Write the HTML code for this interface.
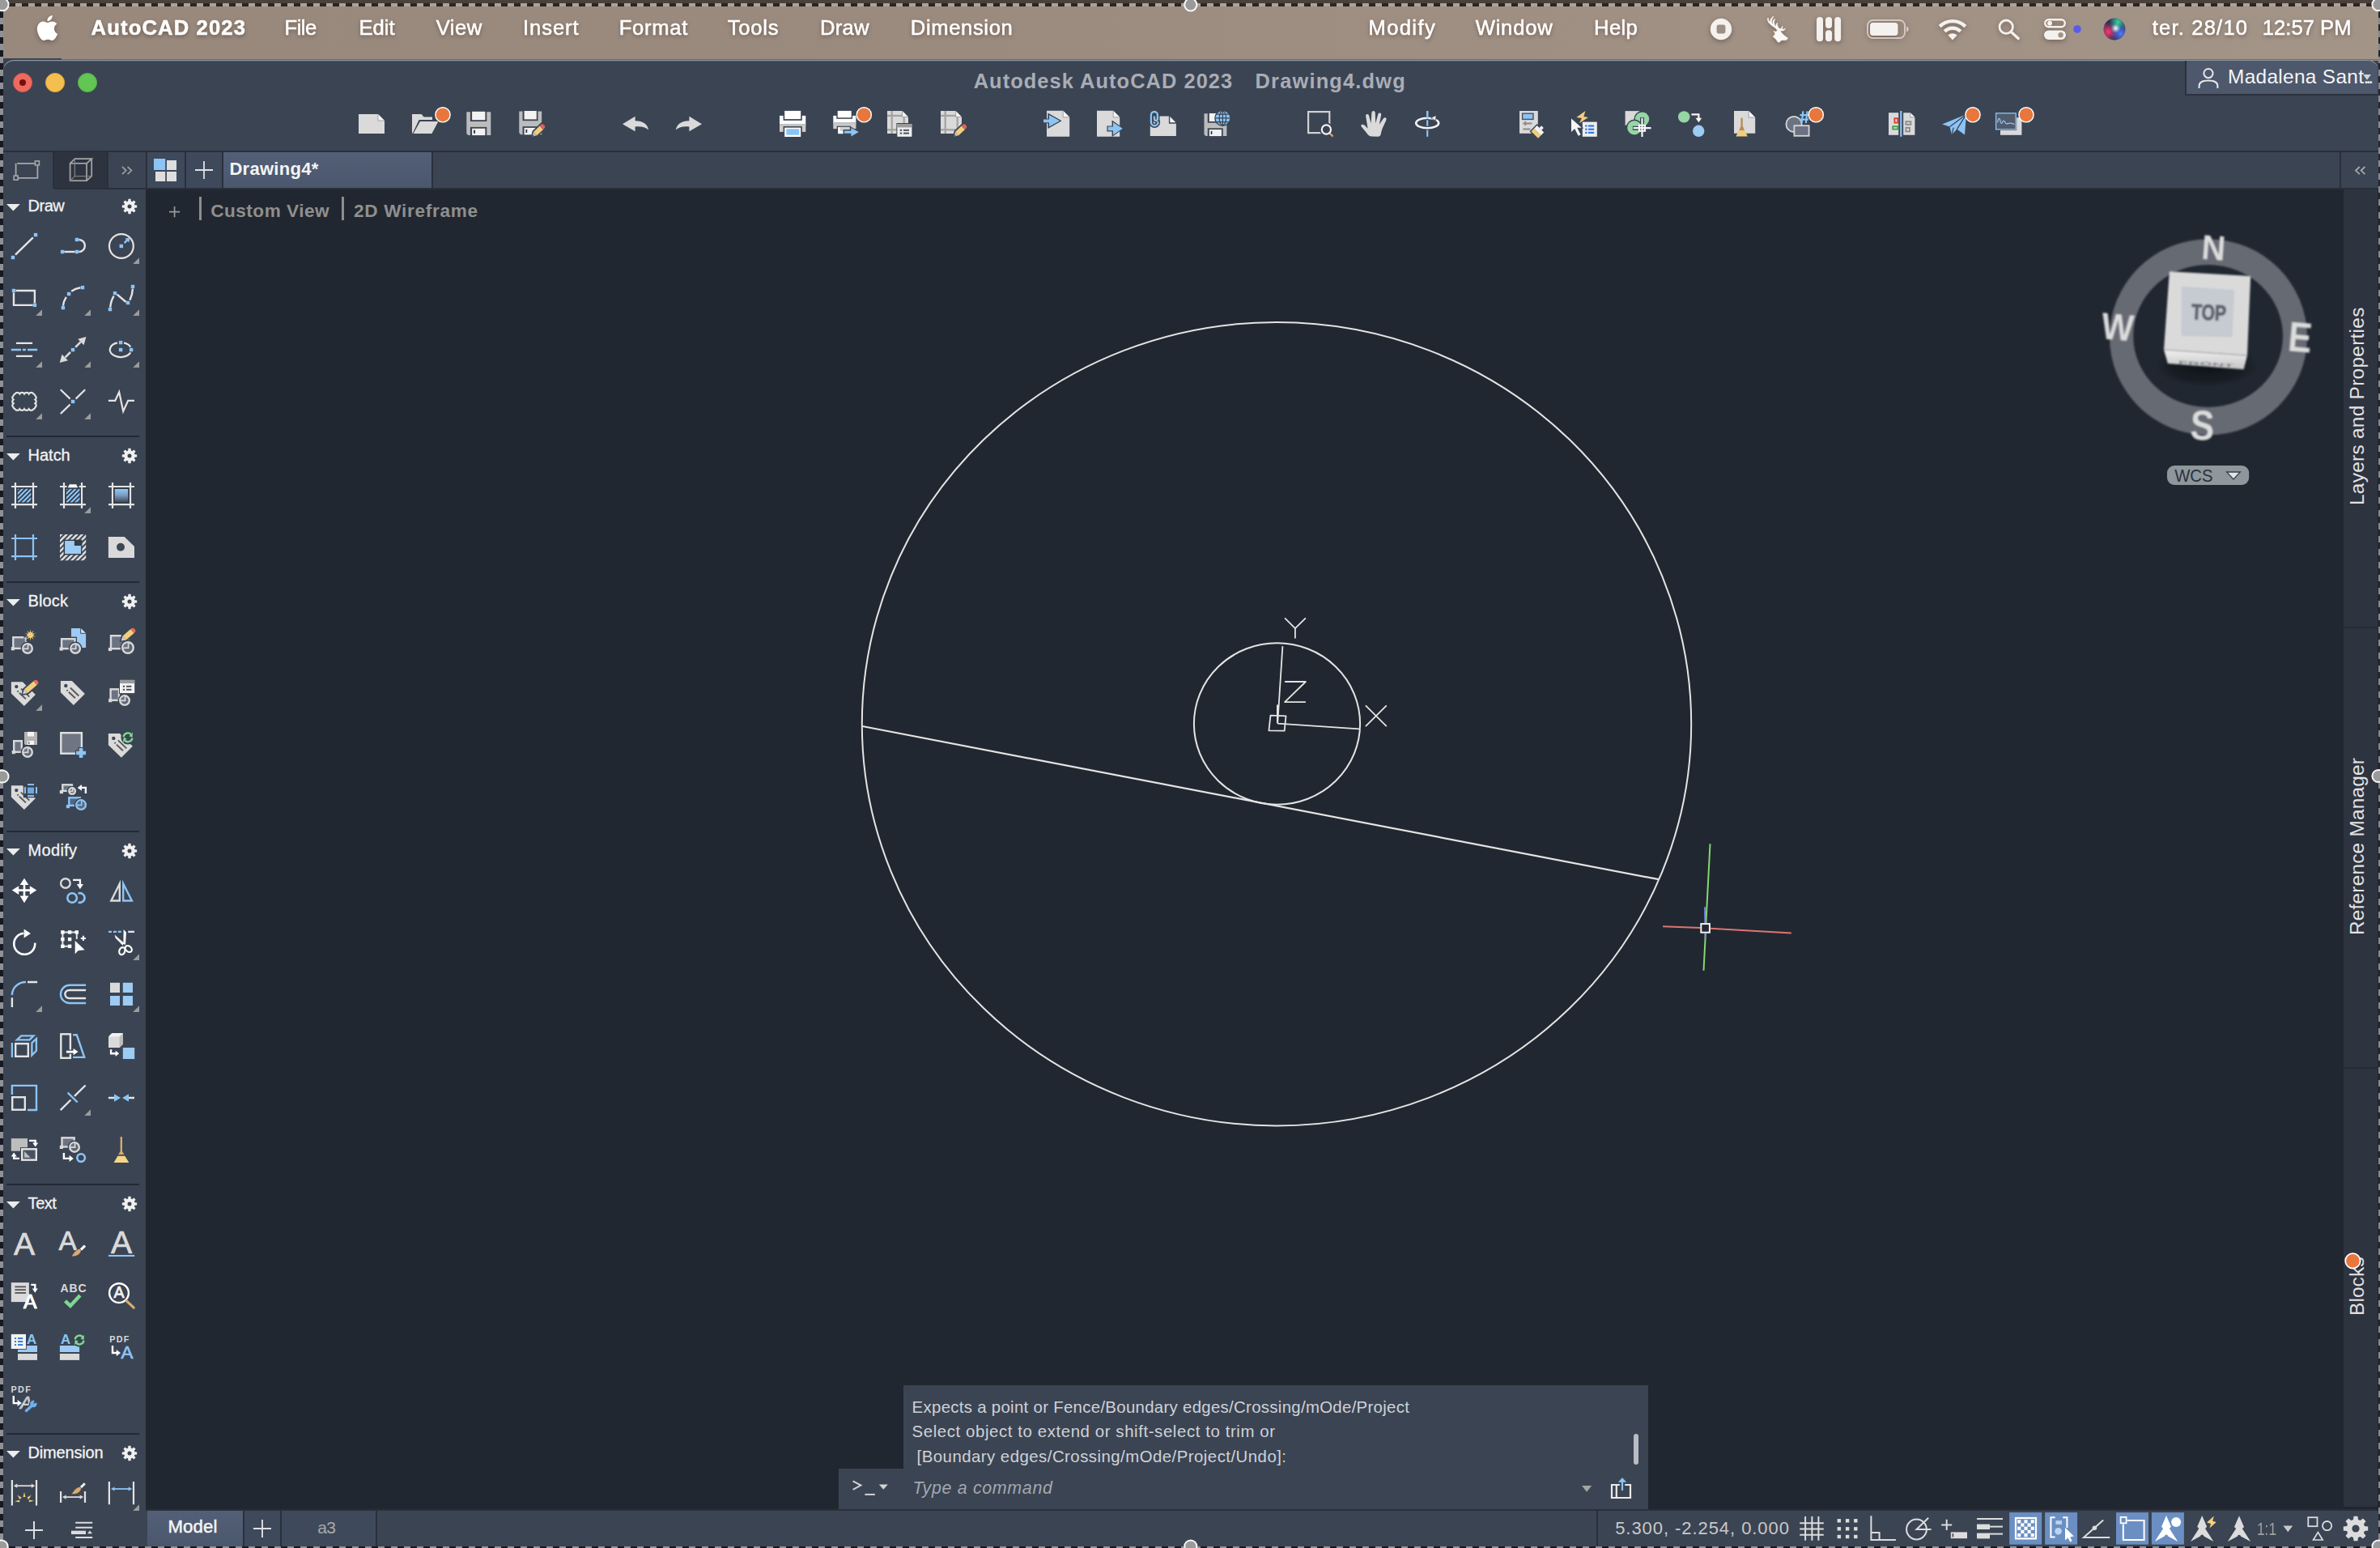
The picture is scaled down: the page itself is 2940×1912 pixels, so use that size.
<!DOCTYPE html>
<html><head><meta charset="utf-8"><title>AutoCAD 2023</title>
<style>
html,body{margin:0;padding:0;background:#212730;}
html{width:2940px;height:1912px;overflow:hidden;}
body{width:2940px;height:1912px;position:relative;overflow:hidden;font-family:"Liberation Sans",sans-serif;}
.b{position:absolute;display:block;}
.t{position:absolute;white-space:pre;font-family:"Liberation Sans",sans-serif;}
svg{overflow:visible;}
</style></head><body>
<div class="b" style="left:0px;top:0px;width:2940px;height:10px;background:#4a403c;"></div>
<div class="b" style="left:0px;top:10px;width:2940px;height:72px;background:#3a4354;"></div>
<div class="b" style="left:0px;top:8.4px;width:2940px;height:67px;background:#9a897d;background:linear-gradient(90deg,#99897d 0%,#9b8b7f 40%,#a19185 72%,#a39488 100%);"></div>
<div class="b" style="left:0px;top:73px;width:2940px;height:1.2px;background:rgba(40,32,30,.35);"></div>
<div class="b" style="left:0px;top:72.4px;width:76px;height:3px;background:#3a4354;"></div>
<div class="b" style="left:4.2px;top:74.2px;width:2933.4px;height:114px;background:#3b4453;border-radius:13px 13px 0 0;box-shadow:inset 0 1.2px 0 #8c95a5;"></div>
<div class="b" style="left:4.2px;top:186px;width:2933.4px;height:2px;background:#2a303b;"></div>
<div class="b" style="left:4.2px;top:188px;width:2933.4px;height:44px;background:#3b4453;"></div>
<div class="b" style="left:4.2px;top:232px;width:2933.4px;height:2px;background:#2a303b;"></div>
<div class="b" style="left:180px;top:234px;width:2757.6px;height:1632px;background:#212730;"></div>
<div class="b" style="left:4.2px;top:188px;width:175.8px;height:1722px;background:#3b4453;border-radius:0 0 0 10px;"></div>
<div class="b" style="left:2894.8px;top:234px;width:42.2px;height:1626.6px;background:#2e3340;"></div>
<div class="b" style="left:180px;top:1866px;width:2757.6px;height:44px;background:#3b4453;border-radius:0 0 10px 0;"></div>
<div class="b" style="left:0px;top:1909.8px;width:2940px;height:2.2px;background:#2a2f38;"></div>
<svg class="b" style="left:208px;top:253.5px;" width="16" height="16" viewBox="0 0 16 16"><path d="M7.6 1 V14.2 M1 7.6 H14.2" stroke="#9a9a9a" stroke-width="1.7" fill="none"/></svg>
<div class="b" style="left:245.8px;top:243.4px;width:3.2px;height:28.2px;background:#8e8e8e;"></div>
<div class="t" style="left:260.2px;top:249.5px;font-size:22.6px;line-height:22.6px;color:#8f8f8f;letter-spacing:0.491px;font-weight:bold;">Custom View</div>
<div class="b" style="left:421.8px;top:243.4px;width:3.2px;height:28.2px;background:#8e8e8e;"></div>
<div class="t" style="left:437.0px;top:249.5px;font-size:22.6px;line-height:22.6px;color:#8f8f8f;letter-spacing:0.696px;font-weight:bold;">2D Wireframe</div>
<svg class="b" style="left:0px;top:0px;" width="2940" height="1912" viewBox="0 0 2940 1912"><ellipse cx="1577" cy="894.2" rx="512.2" ry="496.2" fill="none" stroke="#e4e4e4" stroke-width="2"/><ellipse cx="1577.5" cy="894" rx="102.6" ry="99.7" fill="none" stroke="#e4e4e4" stroke-width="2"/><path d="M1065.3 897 L2049 1086.2" stroke="#e4e4e4" stroke-width="2.2" fill="none"/><g fill="none" stroke="#e4e4e4" stroke-width="1.8" stroke-linejoin="round"><path d="M1578.2 893.6 L1584.4 798.1 M1578.2 893.6 L1679 900.3 M1577.9 893.6 V870.5"/><path d="M1569.5 883.7 L1588.5 884.3 L1586.7 902.7 L1567.4 902.3 Z"/><path d="M1587.1 763.4 L1599.9 776.2 L1612.9 763.4 M1599.9 776.2 V788.6"/><path d="M1587.1 842 H1612.9 L1587.1 867.2 H1612.9"/><path d="M1686.9 871.3 L1712.8 897.2 M1712.8 871.3 L1686.9 897.2"/></g><path d="M2112.5 1042.2 L2107.4 1140 M2106.9 1152.8 L2104.5 1198.7" stroke="#84d870" stroke-width="2" fill="none"/><path d="M2054.1 1144.3 L2100.2 1146.1 M2113 1146.8 L2212.8 1152.5" stroke="#dc7672" stroke-width="2" fill="none"/><path d="M2106.1 1120.3 L2106.3 1140 M2106.4 1152.8 L2106.5 1158.9" stroke="#7a82e6" stroke-width="2" fill="none"/><rect x="2101.3" y="1141.1" width="10.6" height="10.6" fill="none" stroke="#f2f2f2" stroke-width="2"/></svg>
<svg class="b" style="left:0px;top:0px;" width="2940" height="1912" viewBox="0 0 2940 1912"><defs><radialGradient id="vsh" cx="50%" cy="50%" r="50%"><stop offset="0" stop-color="#0c0f14" stop-opacity=".9"/><stop offset=".7" stop-color="#10141a" stop-opacity=".55"/><stop offset="1" stop-color="#10141a" stop-opacity="0"/></radialGradient><linearGradient id="vfr" x1="0" y1="0" x2="0" y2="1"><stop offset="0" stop-color="#f0f0f0"/><stop offset="1" stop-color="#c4c4c4"/></linearGradient><filter id="vb" x="-5%" y="-5%" width="110%" height="110%"><feGaussianBlur stdDeviation="0.9"/></filter></defs><g filter="url(#vb)"><path fill-rule="evenodd" fill="#666b73" d="M2606 416.4 A122 121 0 1 0 2850 416.4 A122 121 0 1 0 2606 416.4 Z M2635.2 415 A92.4 88 0 1 0 2820 415 A92.4 88 0 1 0 2635.2 415 Z"/></g><ellipse cx="2726" cy="452" rx="64" ry="26" fill="url(#vsh)"/><g filter="url(#vb)"><path d="M2673 432 L2776 439.1 L2771.7 456.2 L2677.9 449.1 Z" fill="url(#vfr)"/><path d="M2679.9 335.3 L2780.2 341 L2776 439.1 L2673 432 Z" fill="#dadada"/><path d="M2694.9 353.8 L2760.3 358.1 L2757.5 416.4 L2694.4 414.9 Z" fill="#c6cad1"/><path d="M2673 432 L2776 439.1" stroke="#9a9a9a" stroke-width="1"/><text transform="translate(2728.6,385.6) rotate(2.5)" text-anchor="middle" font-family="Liberation Sans, sans-serif" font-weight="bold" font-size="27" textLength="43" lengthAdjust="spacingAndGlyphs" fill="#5c616c" stroke="#5c616c" stroke-width="1.1" y="9.6">TOP</text><text transform="translate(2725,449.5) rotate(3.6) scale(1,.3)" text-anchor="middle" font-family="Liberation Sans, sans-serif" font-weight="bold" font-size="20" fill="#7a7e86" y="7">FRONT</text><text transform="translate(2734.5,305.5) rotate(4) scale(0.95,1)" text-anchor="middle" font-family="Liberation Sans, sans-serif" font-weight="bold" font-size="43" fill="#dcdcdc" y="15.4">N</text><text transform="translate(2720.5,524.6) rotate(3) scale(0.86,1)" text-anchor="middle" font-family="Liberation Sans, sans-serif" font-weight="bold" font-size="52" fill="#dcdcdc" y="18.6">S</text><text transform="translate(2616,403) rotate(5) scale(0.92,1)" text-anchor="middle" font-family="Liberation Sans, sans-serif" font-weight="bold" font-size="46" fill="#dcdcdc" y="16.5">W</text><text transform="translate(2841.5,416.6) rotate(5) scale(0.86,1)" text-anchor="middle" font-family="Liberation Sans, sans-serif" font-weight="bold" font-size="51" fill="#dcdcdc" y="18.3">E</text></g><rect x="2677" y="575" width="101.2" height="24" rx="9" fill="#8e979b"/><text x="2686.2" y="595" font-family="Liberation Sans, sans-serif" font-size="22" textLength="47.4" lengthAdjust="spacingAndGlyphs" fill="#2b313c">WCS</text><path d="M2750.6 583 H2767.4 L2759 592 Z" fill="#dfe6ea" stroke="#39404b" stroke-width="1.3"/></svg>
<div class="b" style="left:2894.8px;top:774px;width:42px;height:2px;background:#262c37;"></div>
<div class="b" style="left:2894.8px;top:1318.4px;width:42px;height:2px;background:#262c37;"></div>
<div class="t" style="left:2899.7px;top:623.9px;font-size:24.4px;line-height:24.4px;color:#e2e2e2;letter-spacing:0.287px;transform-origin:0 0;transform:rotate(-90deg);">Layers and Properties</div>
<div class="t" style="left:2899.7px;top:1154.8px;font-size:24.4px;line-height:24.4px;color:#e2e2e2;letter-spacing:0.207px;transform-origin:0 0;transform:rotate(-90deg);">Reference Manager</div>
<div class="t" style="left:2899.7px;top:1624.7px;font-size:24.4px;line-height:24.4px;color:#e2e2e2;letter-spacing:0.108px;transform-origin:0 0;transform:rotate(-90deg);">Blocks</div>
<svg class="b" style="left:2895.6px;top:1546.7px;" width="21" height="21" viewBox="0 0 21 21"><circle cx="10.4" cy="10.4" r="9.2" fill="#e8773e" stroke="#fff" stroke-width="1.8"/></svg>
<div class="b" style="left:1115.8px;top:1710.8px;width:920.4px;height:104px;background:#3b4453;"></div>
<div class="b" style="left:1036px;top:1814px;width:1000.2px;height:50.4px;background:#3b4453;"></div>
<div class="b" style="left:2017.8px;top:1770.8px;width:6.6px;height:38.6px;background:#b9bdc3;border-radius:3.3px;"></div>
<div class="t" style="left:1126.6px;top:1728.4px;font-size:20.4px;line-height:20.4px;color:#cfd2d7;letter-spacing:0.302px;">Expects a point or Fence/Boundary edges/Crossing/mOde/Project</div>
<div class="t" style="left:1126.6px;top:1758.4px;font-size:20.4px;line-height:20.4px;color:#cfd2d7;letter-spacing:0.593px;">Select object to extend or shift-select to trim or</div>
<div class="t" style="left:1132.6px;top:1788.5px;font-size:20.4px;line-height:20.4px;color:#cfd2d7;letter-spacing:0.466px;">[Boundary edges/Crossing/mOde/Project/Undo]:</div>
<div class="t" style="left:1127.4px;top:1828.4px;font-size:21.4px;line-height:21.4px;color:#a4a8af;letter-spacing:0.681px;font-style:italic;">Type a command</div>
<svg class="b" style="left:1053px;top:1828px;" width="46" height="20" viewBox="0 0 46 20"><path d="M0.6 1.4 L10.4 6.6 L0.6 11.8" fill="none" stroke="#d2d2d2" stroke-width="2"/><path d="M15.4 17.9 H27.8" stroke="#d2d2d2" stroke-width="2"/><path d="M32.8 5.4 H43.8 L38.3 11.8 Z" fill="#d2d2d2"/></svg>
<svg class="b" style="left:1954px;top:1835px;" width="13" height="9" viewBox="0 0 13 9"><path d="M0 0 H12.2 L6.1 7.8 Z" fill="#a4a4a4"/></svg>
<svg class="b" style="left:1989px;top:1824px;" width="28" height="28" viewBox="0 0 28 28"><path d="M11.9 10 H2 V26 H25 V10 H18.2 M7.8 10 V26" fill="none" stroke="#eaeaea" stroke-width="2.2"/><path d="M15 17 V6" stroke="#8cc4f4" stroke-width="2.2"/><path d="M9.9 6.8 L15 1 L20.1 6.8 Z" fill="#8cc4f4"/></svg>
<svg class="b" style="left:14px;top:87.5px;" width="110" height="28" viewBox="0 0 110 28"><circle cx="14" cy="14" r="11.6" fill="#ee6a5f" stroke="#d5524a" stroke-width="1"/><circle cx="14" cy="14" r="4" fill="#73100b"/><circle cx="54" cy="14" r="11.6" fill="#f5bf4f" stroke="#d9a33c" stroke-width="1"/><circle cx="94" cy="14" r="11.6" fill="#62c554" stroke="#52a945" stroke-width="1"/></svg>
<div class="t" style="left:1202.7px;top:88.0px;font-size:25.4px;line-height:25.4px;color:#a9adb5;letter-spacing:1.064px;font-weight:bold;">Autodesk AutoCAD 2023</div>
<div class="t" style="left:1550.6px;top:88.0px;font-size:25.4px;line-height:25.4px;color:#a9adb5;letter-spacing:1.181px;font-weight:bold;">Drawing4.dwg</div>
<div class="b" style="left:2701px;top:75px;width:236px;height:41.4px;background:#4d586c;border-radius:0 13px 0 0;"></div>
<div class="b" style="left:2701px;top:116.4px;width:236px;height:1.8px;background:#2c323d;"></div>
<div class="b" style="left:2699.4px;top:75px;width:1.8px;height:43px;background:#2c323d;"></div>
<svg class="b" style="left:2713px;top:82px;" width="30" height="30" viewBox="0 0 30 30"><circle cx="15" cy="8.6" r="5.6" fill="none" stroke="#e8e8e8" stroke-width="2"/><path d="M3.6 27 V24 C3.6 19.6 8 17.4 15 17.4 C22 17.4 26.4 19.6 26.4 24 V27" fill="none" stroke="#e8e8e8" stroke-width="2"/></svg>
<div class="t" style="left:2752.0px;top:83.2px;font-size:24.4px;line-height:24.4px;color:#f4f4f4;letter-spacing:0.326px;">Madalena Sant</div>
<div class="t" style="left:2919.4px;top:83.2px;font-size:24.4px;line-height:24.4px;color:#f4f4f4;letter-spacing:-3.887px;">...</div>
<svg class="b" style="left:2919.4px;top:92.2px;" width="10" height="7" viewBox="0 0 10 7"><path d="M0 0 H10 L5 6.8 Z" fill="#d4d4d4"/></svg>
<svg class="b" style="left:443px;top:137px;" width="32" height="32" viewBox="0 0 32 32"><path d="M0 4 H24 L32 12 V28 H0 Z" fill="#dadada"/><path d="M24 4 V12 H32 Z" fill="#f4f4f4"/><path d="M24 4 V12 H32" fill="none" stroke="#3b4453" stroke-width=".8" stroke-opacity=".5"/></svg>
<svg class="b" style="left:509px;top:137px;" width="32" height="32" viewBox="0 0 32 32"><path d="M0 4 H11.6 L14.6 7.6 H25 V11 H8.6 L0.8 27.4 H0 Z" fill="#dadada"/><path d="M10 13 H32.4 L24.4 28 H1.6 Z" fill="#dadada"/><circle cx="38" cy="4.8" r="9.1" fill="#e8773e" stroke="#fff" stroke-width="1.4"/></svg>
<svg class="b" style="left:575.6px;top:137px;" width="32" height="32" viewBox="0 0 32 32"><g transform="translate(0,0)"><path d="M0.3 1.2 H30.3 V30 H2.4 L0.3 27.9 Z" fill="#bcbcbc"/><rect x="4.9" y="0.2" width="20.4" height="12.8" fill="#3b4453"/><rect x="7.1" y="0.8" width="16.3" height="10.4" fill="#f2f2f2"/><rect x="4.9" y="19.9" width="20.4" height="10.4" fill="#3b4453"/><rect x="7.1" y="21.7" width="16.3" height="8.4" fill="#f2f2f2"/><rect x="9.1" y="23.6" width="1.9" height="4.2" fill="#2f3642"/></g></svg>
<svg class="b" style="left:641px;top:137px;" width="32" height="32" viewBox="0 0 32 32"><g transform="scale(.93,1)"><g transform="translate(0,-0.8)"><path d="M0.3 1.2 H30.3 V30 H2.4 L0.3 27.9 Z" fill="#bcbcbc"/><rect x="4.9" y="0.2" width="20.4" height="12.8" fill="#3b4453"/><rect x="7.1" y="0.8" width="16.3" height="10.4" fill="#f2f2f2"/><rect x="4.9" y="19.9" width="20.4" height="10.4" fill="#3b4453"/><rect x="7.1" y="21.7" width="16.3" height="8.4" fill="#f2f2f2"/><rect x="9.1" y="23.6" width="1.9" height="4.2" fill="#2f3642"/></g></g><g transform="translate(16.6,31.5) rotate(-44) scale(.94,.86)"><path d="M-3 0 L5 -5.6 H22 V5.6 H5 Z" fill="#3b4453"/></g><g transform="translate(16.6,31.5) rotate(-44) scale(.94,.86)"><path d="M0 0 L5.2 -3.6 L5.2 3.6 Z" fill="#c4c4c4"/><path d="M0 0 L2 -1.4 L2 1.4 Z" fill="#555"/><rect x="5.2" y="-3.6" width="11.4" height="7.2" fill="#f2cd7a"/><path d="M16.6 -3.6 H18.4 A3.2 3.6 0 0 1 18.4 3.6 H16.6 Z" fill="#e0605a"/></g></svg>
<svg class="b" style="left:769.3px;top:137px;" width="32" height="32" viewBox="0 0 32 32"><path d="M0 16.2 L15.6 6.8 V12.2 C24.5 12 31.2 16 32 23.6 C28 19.6 23 18.8 15.6 19.4 V25.2 Z" fill="#dadada"/></svg>
<svg class="b" style="left:834.6px;top:137px;" width="32" height="32" viewBox="0 0 32 32"><path transform="translate(32,0) scale(-1,1)" d="M0 16.2 L15.6 6.8 V12.2 C24.5 12 31.2 16 32 23.6 C28 19.6 23 18.8 15.6 19.4 V25.2 Z" fill="#dadada"/></svg>
<svg class="b" style="left:962.8px;top:137px;" width="32" height="32" viewBox="0 0 32 32"><rect x="0" y="5.9" width="32.3" height="10.4" fill="#fcfcfc"/><rect x="0" y="16.1" width="32.3" height="9.8" fill="#cdcdcd"/><rect x="0" y="16.1" width="32.3" height="2.6" fill="#c2c2c2"/><rect x="4.6" y="5" width="23.2" height="6.8" fill="#3b4453"/><rect x="6.2" y="-0.1" width="20" height="10.2" fill="#ffffff"/><rect x="4.6" y="19" width="23.2" height="8" fill="#3b4453"/><rect x="6.2" y="20.6" width="20" height="11.4" fill="#ffffff"/><rect x="8.3" y="22.2" width="16" height="7.5" fill="#8cc4f4"/></svg>
<svg class="b" style="left:1028.7px;top:137px;" width="32" height="32" viewBox="0 0 32 32"><rect x="0.3" y="5.9" width="28.1" height="8.4" fill="#fcfcfc"/><rect x="0.3" y="14.2" width="28.1" height="7.9" fill="#cdcdcd"/><rect x="0.3" y="14.2" width="28.1" height="2.2" fill="#c2c2c2"/><rect x="4.3" y="5" width="19.8" height="4.8" fill="#3b4453"/><rect x="5.7" y="-0.1" width="17" height="8.4" fill="#ffffff"/><rect x="4.7" y="18.6" width="17.2" height="5" fill="#3b4453"/><rect x="6.1" y="19.9" width="14.4" height="8.3" fill="#ffffff"/><rect x="8.6" y="19.9" width="11.9" height="5" fill="#d0d0d0"/><path d="M12.6 23 H21 V19 L33.6 25.9 L21 33.4 V29.2 H12.6 Z" fill="#3b4453"/><path d="M14 24.4 H22.4 V21 L31.8 25.9 L22.4 31.6 V27.8 H14 Z" fill="#8cc4f4"/><circle cx="38.3" cy="4.8" r="9.1" fill="#e8773e" stroke="#fff" stroke-width="1.4"/></svg>
<svg class="b" style="left:1095.6px;top:137px;" width="32" height="32" viewBox="0 0 32 32"><path d="M0 0 H18.6 L26 7.4 V28 H0 Z" fill="#dadada"/><path d="M18.6 0 V7.4 H26 Z" fill="#f6f6f6"/><path d="M18.6 0 V7.4 H26" fill="none" stroke="#3b4453" stroke-width=".8" stroke-opacity=".55"/><g fill="#a2a2a2"><rect x="4.6" y="0" width="2.2" height="28"/><rect x="0" y="4.8" width="18.6" height="2.2"/><rect x="0" y="22.2" width="26" height="2.2"/><rect x="19.6" y="7.4" width="2.2" height="20.6"/></g><rect x="11.4" y="15" width="19.8" height="17.6" fill="#3b4453"/><rect x="12.4" y="16" width="18" height="15.8" fill="#f0f0f0"/><rect x="12.4" y="16" width="18" height="4.4" fill="#9a9a9a"/><g fill="#4a5160"><rect x="15.6" y="22.8" width="2.6" height="2"/><rect x="20" y="22.8" width="7" height="2"/><rect x="15.6" y="26.6" width="2.6" height="2"/><rect x="20" y="26.6" width="7" height="2"/></g></svg>
<svg class="b" style="left:1161.8px;top:137px;" width="32" height="32" viewBox="0 0 32 32"><path d="M0 0 H18.6 L26 7.4 V28 H0 Z" fill="#dadada"/><path d="M18.6 0 V7.4 H26 Z" fill="#f6f6f6"/><path d="M18.6 0 V7.4 H26" fill="none" stroke="#3b4453" stroke-width=".8" stroke-opacity=".55"/><g fill="#a2a2a2"><rect x="4.6" y="0" width="2.2" height="28"/><rect x="0" y="4.8" width="18.6" height="2.2"/><rect x="0" y="22.2" width="26" height="2.2"/><rect x="19.6" y="7.4" width="2.2" height="20.6"/></g><g transform="translate(16.6,31.5) rotate(-44) scale(.94,.86)"><path d="M-3 0 L5 -5.6 H22 V5.6 H5 Z" fill="#3b4453"/></g><g transform="translate(16.6,31.5) rotate(-44) scale(.94,.86)"><path d="M0 0 L5.2 -3.6 L5.2 3.6 Z" fill="#c4c4c4"/><path d="M0 0 L2 -1.4 L2 1.4 Z" fill="#555"/><rect x="5.2" y="-3.6" width="11.4" height="7.2" fill="#f2cd7a"/><path d="M16.6 -3.6 H18.4 A3.2 3.6 0 0 1 18.4 3.6 H16.6 Z" fill="#e0605a"/></g></svg>
<svg class="b" style="left:1288.9px;top:137px;" width="32" height="32" viewBox="0 0 32 32"><path d="M4 -0.2 H24.200000000000003 L32.2 7.8 V31.8 H4 Z" fill="#dadada"/><path d="M24.200000000000003 -0.2 V7.8 H32.2 Z" fill="#f6f6f6"/><path d="M24.200000000000003 -0.2 V7.8 H32.2" fill="none" stroke="#3b4453" stroke-width=".8" stroke-opacity=".55"/><path d="M-1 9.4 H5.4 V2.6 L22.6 12.2 L5.4 22 V15.2 H-1 Z" fill="#3b4453"/><path d="M0 10.4 H7 V5 L20.2 12.2 L7 19.6 V14.2 H0 Z" fill="#8cc4f4"/></svg>
<svg class="b" style="left:1355.1px;top:137px;" width="32" height="32" viewBox="0 0 32 32"><path d="M0 -0.2 H20.2 L28.2 7.8 V31.8 H0 Z" fill="#dadada"/><path d="M20.2 -0.2 V7.8 H28.2 Z" fill="#f6f6f6"/><path d="M20.2 -0.2 V7.8 H28.2" fill="none" stroke="#3b4453" stroke-width=".8" stroke-opacity=".55"/><path d="M12.4 18.4 H18.6 V11.6 L33.4 21.8 L18.6 32 V25.4 H12.4 Z" fill="#3b4453"/><path d="M13.6 19.4 H20 V14 L31.8 21.8 L20 29.8 V24.2 H13.6 Z" fill="#8cc4f4"/></svg>
<svg class="b" style="left:1420.2px;top:137px;" width="32" height="32" viewBox="0 0 32 32"><path d="M0.8 6.6 H24.9 L32.9 14.7 V31.1 H0.8 Z" fill="#dadada"/><path d="M24.6 6 V15 H33.4" fill="none" stroke="#3b4453" stroke-width="1.4"/><path d="M25.6 8 V14 H31.6 Z" fill="#f6f6f6"/><path d="M6 6.4 V10 A1.95 1.95 0 0 0 9.9 10 V5 A4 4 0 0 0 1.9 5 V14 A4.3 4.3 0 0 0 10.5 14 V13" fill="none" stroke="#3b4453" stroke-width="5.2" stroke-linecap="round"/><path d="M6 6.4 V10 A1.95 1.95 0 0 0 9.9 10 V5 A4 4 0 0 0 1.9 5 V14 A4.3 4.3 0 0 0 10.5 14 V13" fill="none" stroke="#8cc4f4" stroke-width="2.3"/></svg>
<svg class="b" style="left:1486.7px;top:137px;" width="32" height="32" viewBox="0 0 32 32"><g transform="translate(0.2,2.2) scale(.93,.96)"><g transform="translate(0,0)"><path d="M0.3 1.2 H30.3 V30 H2.4 L0.3 27.9 Z" fill="#bcbcbc"/><rect x="4.9" y="0.2" width="20.4" height="12.8" fill="#3b4453"/><rect x="7.1" y="0.8" width="16.3" height="10.4" fill="#f2f2f2"/><rect x="4.9" y="19.9" width="20.4" height="10.4" fill="#3b4453"/><rect x="7.1" y="21.7" width="16.3" height="8.4" fill="#f2f2f2"/><rect x="9.1" y="23.6" width="1.9" height="4.2" fill="#2f3642"/></g></g><circle cx="23.4" cy="8.9" r="10.2" fill="#3b4453"/><circle cx="23.4" cy="8.9" r="8.8" fill="#8cc4f4"/><g fill="none" stroke="#3b4453" stroke-width="1.2"><ellipse cx="23.4" cy="8.9" rx="4.2" ry="8.8"/><path d="M14.6 8.9 H32.2 M16 4.2 H30.8 M16 13.6 H30.8 M23.4 0.1 V17.7"/></g></svg>
<svg class="b" style="left:1614.8px;top:137px;" width="32" height="32" viewBox="0 0 32 32"><rect x="1.1" y="1.1" width="26.2" height="26" fill="none" stroke="#d2d2d2" stroke-width="2.2"/><circle cx="23.4" cy="23" r="8.4" fill="#3b4453"/><path d="M27 27 L31.6 31.6" stroke="#d9a66a" stroke-width="2.2"/><circle cx="23.4" cy="23" r="5.6" fill="#3b4453" stroke="#f4f4f4" stroke-width="2.2"/></svg>
<svg class="b" style="left:1680.8px;top:137px;" width="32" height="32" viewBox="0 0 32 32"><path d="M13.4 31.6 C10.8 31.2 8.8 29.6 7.2 27.2 L0.8 19.4 C-0.2 18 0.4 16.8 1.8 16.8 C3.4 16.8 4.8 17.6 6 19 L8.6 21.8 L6.2 6.6 C6 5 6.6 4 7.8 3.9 C9 3.8 9.8 4.6 10.2 6.2 L12.6 15.4 L13.4 2.6 C13.5 1 14.3 0.1 15.6 0.1 C16.9 0.1 17.7 1 17.8 2.6 L18.2 15.2 L21.2 4.4 C21.7 2.8 22.6 2.2 23.8 2.5 C25 2.8 25.4 3.9 25.1 5.4 L22.8 16.8 L27.8 9.4 C28.7 8.2 29.8 7.9 30.8 8.6 C31.8 9.3 31.8 10.4 31.2 11.7 L26.6 21.8 C25.6 24.4 25.2 27 24.6 29.2 C24.2 30.8 23 31.6 21.2 31.7 Z" fill="#dadada"/></svg>
<svg class="b" style="left:1747.9px;top:137px;" width="32" height="32" viewBox="0 0 32 32"><path d="M15.2 0 V31.8" stroke="#8cc4f4" stroke-width="2.2"/><ellipse cx="15.2" cy="15" rx="14" ry="6.2" fill="none" stroke="#3b4453" stroke-width="5"/><ellipse cx="15.2" cy="15" rx="14" ry="6.2" fill="none" stroke="#f4f4f4" stroke-width="2.6"/><path d="M15.2 0 V9.8" stroke="#8cc4f4" stroke-width="2.2"/><path d="M19.6 8.6 L26 5.4 L25.6 12.2 Z" fill="#f4f4f4" stroke="#3b4453" stroke-width=".8"/></svg>
<svg class="b" style="left:1876.5px;top:137px;" width="32" height="32" viewBox="0 0 32 32"><rect x="0" y="0" width="22.8" height="27.8" fill="#dadada"/><rect x="3.6" y="3.2" width="13.4" height="7.2" fill="#8cc4f4" stroke="#4a5160" stroke-width="1.4"/><g stroke="#8a8a8a" stroke-width="2" fill="none"><path d="M4.4 15.4 H15.4 M7.2 12.8 V18 M4.4 22.6 H13.4"/></g><g transform="translate(23.4,24.8) rotate(-45)"><path d="M-8 -7.4 H5 V-3.2 H8.6 V3.2 H5 V7.4 H-8 Z" fill="#3b4453"/><rect x="-6.6" y="-6" width="5" height="12" fill="#f2cd7a"/><rect x="-1.6" y="-6" width="5.2" height="12" fill="#f2f2f2"/><rect x="3.4" y="-1.9" width="3.8" height="3.8" fill="#f2f2f2"/></g></svg>
<svg class="b" style="left:1940.3px;top:137px;" width="32" height="32" viewBox="0 0 32 32"><path d="M18.4 0.1 L7.3 8.1 L13.9 9.1 L10.9 15.2 L22 8.1 L16.4 7.1 Z" fill="#f2cd7a"/><rect x="14.8" y="13.6" width="18" height="18.2" fill="#eeeeee"/><g fill="#2f7be0"><rect x="18.2" y="17.4" width="2.4" height="2.2"/><rect x="22" y="17.4" width="7.2" height="2.2"/><rect x="18.2" y="21.6" width="2.4" height="2.2"/><rect x="22" y="21.6" width="7.2" height="2.2"/><rect x="18.2" y="25.8" width="2.4" height="2.2"/><rect x="22" y="25.8" width="7.2" height="2.2"/></g><path d="M0.4 8 L0.4 27.4 L5 23 L9.4 31.6 L13.4 29.6 L9.2 21.4 L15 21 Z" fill="#f6f6f6" stroke="#3b4453" stroke-width="1.2"/></svg>
<svg class="b" style="left:2006.8px;top:137px;" width="32" height="32" viewBox="0 0 32 32"><rect x="0.6" y="0.1" width="17.9" height="17.6" fill="#dadada"/><circle cx="21.5" cy="10.1" r="9.4" fill="#96d6a4" stroke="#3b4453" stroke-width="1.4"/><circle cx="11.9" cy="20.7" r="9.4" fill="#96d6a4" stroke="#3b4453" stroke-width="1.4"/><g stroke="#3b4453" stroke-width="5" fill="none"><path d="M21.5 8 V32.6 M9.8 21.2 H33.2"/></g><g stroke="#f6f6f6" stroke-width="2.2" fill="none"><path d="M21.5 8.8 V32 M10.6 21.2 H32.6"/><rect x="18" y="17.7" width="7" height="7"/></g></svg>
<svg class="b" style="left:2072.8px;top:137px;" width="32" height="32" viewBox="0 0 32 32"><circle cx="7.2" cy="7.4" r="7.2" fill="#96d6a4"/><circle cx="25.2" cy="24.8" r="7.2" fill="#9ccbf4"/><path d="M16.4 4.4 H25.4 V9.4" fill="none" stroke="#f6f6f6" stroke-width="2.2"/><path d="M21.6 8.8 H29.2 L25.4 14.2 Z" fill="#f6f6f6"/></svg>
<svg class="b" style="left:2142px;top:137px;" width="32" height="32" viewBox="0 0 32 32"><path d="M0 0 H18.2 L26.2 8 V27.8 H0 Z" fill="#dadada"/><path d="M18.2 0 V8 H26.2 Z" fill="#f6f6f6"/><path d="M18.2 0 V8 H26.2" fill="none" stroke="#3b4453" stroke-width=".8" stroke-opacity=".55"/><path d="M9.6 8.6 V23" stroke="#b98c58" stroke-width="2.4"/><path d="M8 19.4 H11.2 L13 24.2 H6.2 Z" fill="#b98c58"/><path d="M5.8 24.2 H13.4 L16.8 31.6 H2.4 Z" fill="#f2cd7a"/></svg>
<svg class="b" style="left:2204.9px;top:137px;" width="32" height="32" viewBox="0 0 32 32"><circle cx="11" cy="16.4" r="9.6" fill="#6b7382" stroke="#d6d6d6" stroke-width="1.8"/><rect x="11.4" y="18.2" width="18.2" height="12.6" fill="#6b7382" stroke="#d6d6d6" stroke-width="1.8"/><g stroke="#8cc4f4" stroke-width="2.2" fill="none"><path d="M22.4 0.4 L20.6 15 M27.6 0.4 L25.8 15 M18.4 5.2 H29.6 M17.6 10.6 H28.8"/></g><circle cx="38.3" cy="4.8" r="9.1" fill="#e8773e" stroke="#fff" stroke-width="1.4"/></svg>
<svg class="b" style="left:2332.7px;top:137px;" width="32" height="32" viewBox="0 0 32 32"><rect x="0" y="2.2" width="12.2" height="27.6" fill="#dadada"/><path d="M18.2 2.2 H26.799999999999997 L32.4 7.8 V29.8 H18.2 Z" fill="#dadada"/><path d="M26.799999999999997 2.2 V7.8 H32.4 Z" fill="#f6f6f6"/><path d="M26.799999999999997 2.2 V7.8 H32.4" fill="none" stroke="#3b4453" stroke-width=".8" stroke-opacity=".55"/><rect x="14.2" y="0" width="2.2" height="31.8" fill="#8cc4f4"/><rect x="7.4" y="9.2" width="4" height="5.4" fill="none" stroke="#e03a32" stroke-width="1.8"/><rect x="5.2" y="19.2" width="6.2" height="3.4" fill="none" stroke="#3da53d" stroke-width="1.8"/><rect x="21.4" y="13.2" width="6" height="3.6" fill="none" stroke="#8a8a8a" stroke-width="1.8"/><rect x="21.4" y="20.8" width="4.6" height="4.6" fill="none" stroke="#8a8a8a" stroke-width="1.8"/></svg>
<svg class="b" style="left:2399.2px;top:137px;" width="32" height="32" viewBox="0 0 32 32"><path d="M0 16.4 L30 4.2 L28 29.6 L18.4 22.6 L11.8 29.6 L9.6 19.4 Z" fill="#8cc4f4"/><path d="M30 4.2 L9.6 19.4 M30 4.2 L18.4 22.6 M11.8 29.6 L14.2 20.6" stroke="#3b4453" stroke-width="1.3" fill="none"/><circle cx="38" cy="4.8" r="9.1" fill="#e8773e" stroke="#fff" stroke-width="1.4"/></svg>
<svg class="b" style="left:2465px;top:137px;" width="32" height="32" viewBox="0 0 32 32"><rect x="6" y="8.2" width="26.4" height="21.6" fill="#dadada"/><rect x="-0.6" y="1.6" width="26.8" height="22.4" fill="#3b4453"/><rect x="0.6" y="2.8" width="24.6" height="20" fill="#525b6b" stroke="#8cc4f4" stroke-width="1.3"/><path d="M2.6 14.4 C3.4 8.4 5 8 5.8 12 C6.4 15.6 7.6 16.4 8.8 13.6 C9.8 11.4 10.8 11.8 11.8 14 C13 16.4 14.4 16.2 16 15.4 C18.6 14.4 21 15.6 23.4 16.4" fill="none" stroke="#8cc4f4" stroke-width="1.3"/><circle cx="38" cy="4.8" r="9.1" fill="#e8773e" stroke="#fff" stroke-width="1.4"/></svg>
<div class="b" style="left:66.8px;top:188px;width:65.6px;height:44px;background:#2e3340;"></div>
<div class="b" style="left:65px;top:188px;width:1.8px;height:46px;background:#2a303b;"></div>
<div class="b" style="left:132.4px;top:188px;width:1.6px;height:46px;background:#2a303b;"></div>
<div class="b" style="left:180px;top:188px;width:2px;height:46px;background:#2a303b;"></div>
<div class="b" style="left:5px;top:232px;width:61px;height:2.2px;background:#3b4453;"></div>
<div class="b" style="left:182px;top:188px;width:46px;height:44px;background:#3e495b;"></div>
<div class="b" style="left:228px;top:188px;width:2px;height:44px;background:#2a303b;"></div>
<div class="b" style="left:230px;top:188px;width:44px;height:44px;background:#3e495b;"></div>
<div class="b" style="left:274px;top:188px;width:2.4px;height:44px;background:#2a303b;"></div>
<div class="b" style="left:276.4px;top:188px;width:256.8px;height:44px;background:#4f5b72;background:linear-gradient(#525f76,#4b576d);"></div>
<div class="b" style="left:533.2px;top:188px;width:1.6px;height:44px;background:#2a303b;"></div>
<div class="b" style="left:2890.2px;top:188px;width:1.8px;height:44px;background:#2a303b;"></div>
<svg class="b" style="left:16px;top:198px;" width="34" height="26" viewBox="0 0 34 26"><path d="M5.2 3.8 H27.4 M30.4 6.4 V21.8 H6.6 M3.6 19 V3.8" fill="none" stroke="#a8a8a8" stroke-width="1.8"/><rect x="27.4" y="0.9" width="5" height="5" fill="none" stroke="#a8a8a8" stroke-width="1.6"/><rect x="1.2" y="19.2" width="5" height="5" fill="none" stroke="#a8a8a8" stroke-width="1.6"/></svg>
<svg class="b" style="left:85px;top:195px;" width="30" height="30" viewBox="0 0 30 30"><g fill="none" stroke="#a6a6a6" stroke-width="1.7"><rect x="1.6" y="6.8" width="20.4" height="21.4"/><path d="M1.6 6.8 L7.4 1.2 H28.2 L22 6.8 M28.2 1.2 V22.6 L22 28.2"/></g><g fill="none" stroke="#7e7e7e" stroke-width="1.3"><path d="M7.4 1.2 V22.6 H28.2 M7.4 22.6 L1.6 28.2"/></g></svg>
<svg class="b" style="left:150.4px;top:204.6px;" width="14" height="12" viewBox="0 0 14 12"><path d="M1 1 L5.8 5.6 L1 10.2 M7.6 1 L12.4 5.6 L7.6 10.2" fill="none" stroke="#9a9a9a" stroke-width="1.8"/></svg>
<div class="b" style="left:66.8px;top:232px;width:113.4px;height:2px;background:#2a303b;"></div>
<svg class="b" style="left:190px;top:196px;" width="30" height="30" viewBox="0 0 30 30"><rect x="0" y="0" width="14.2" height="14" fill="#8cc4f4"/><rect x="16" y="2" width="12" height="12" fill="#dedede"/><rect x="2" y="16" width="12.2" height="12" fill="#dedede"/><rect x="16" y="16" width="12" height="12" fill="#dedede"/></svg>
<svg class="b" style="left:240px;top:198px;" width="24" height="24" viewBox="0 0 24 24"><path d="M12 1 V23 M1 12 H23" stroke="#e0e0e0" stroke-width="1.8" fill="none"/></svg>
<div class="t" style="left:283.4px;top:197.5px;font-size:22px;line-height:22px;color:#f4f4f4;letter-spacing:0.290px;font-weight:bold;">Drawing4*</div>
<svg class="b" style="left:2908.6px;top:204.6px;" width="14" height="12" viewBox="0 0 14 12"><path d="M5.8 1 L1 5.6 L5.8 10.2 M12.4 1 L7.6 5.6 L12.4 10.2" fill="none" stroke="#a8a8a8" stroke-width="1.8"/></svg>
<div class="t" style="left:34.6px;top:243.9px;font-size:20px;line-height:20px;color:#f2f2f2;letter-spacing:-0.533px;-webkit-text-stroke:.3px #f2f2f2;">Draw</div>
<svg class="b" style="left:8.4px;top:252.2px;" width="17" height="9" viewBox="0 0 17 9"><path d="M0 0 H16.8 L8.4 8.6 Z" fill="#ececec"/></svg>
<svg class="b" style="left:150px;top:245.4px;" width="20" height="20" viewBox="0 0 20 20"><polygon points="19.17,8.43 19.17,11.57 16.44,11.85 15.86,13.24 17.59,15.37 15.37,17.59 13.24,15.86 11.85,16.44 11.57,19.17 8.43,19.17 8.15,16.44 6.76,15.86 4.63,17.59 2.41,15.37 4.14,13.24 3.56,11.85 0.83,11.57 0.83,8.43 3.56,8.15 4.14,6.76 2.41,4.63 4.63,2.41 6.76,4.14 8.15,3.56 8.43,0.83 11.57,0.83 11.85,3.56 13.24,4.14 15.37,2.41 17.59,4.63 15.86,6.76 16.44,8.15" fill="#f0f0f0"/><circle cx="10" cy="10" r="2.51" fill="#3b4453"/></svg>
<svg class="b" style="left:14px;top:288.0px;" width="32" height="32" viewBox="0 0 32 32"><path d="M5 26.6 L26.8 5.4" fill="none" stroke="#e4e4e4" stroke-width="2.4" /><rect x="-0.20" y="27.80" width="4.4" height="4.4" fill="#8cc4f4"/><rect x="27.80" y="-0.10" width="4.4" height="4.4" fill="#8cc4f4"/></svg>
<svg class="b" style="left:74px;top:288.0px;" width="32" height="32" viewBox="0 0 32 32"><path d="M5.4 23 H18.6" fill="none" stroke="#e4e4e4" stroke-width="2.4" /><path d="M23.4 8 A7.5 7.5 0 0 1 23.4 23" fill="none" stroke="#e4e4e4" stroke-width="2.4" /><rect x="0.90" y="20.80" width="4.4" height="4.4" fill="#8cc4f4"/><rect x="18.80" y="20.80" width="4.4" height="4.4" fill="#8cc4f4"/><rect x="18.80" y="5.80" width="4.4" height="4.4" fill="#8cc4f4"/></svg>
<svg class="b" style="left:134px;top:288.0px;" width="32" height="32" viewBox="0 0 32 32"><circle cx="15.9" cy="16" r="14.9" fill="none" stroke="#e4e4e4" stroke-width="2.2"/><rect x="13.60" y="13.80" width="4.4" height="4.4" fill="#8cc4f4"/><path d="M19.6 12.2 L23.4 8.4" fill="none" stroke="#8cc4f4" stroke-width="2.4" /><path d="M26.4 5.6 L25.4 11.6 L23.4 9.6 L21.6 11.4 L20.4 10.2 L22.2 8.4 L20.4 6.6 Z" fill="#8cc4f4"/><path d="M38 30.2 V38 H30.2 Z" fill="#9c9c9c"/></svg>
<svg class="b" style="left:14px;top:352.0px;" width="32" height="32" viewBox="0 0 32 32"><path d="M5.6 7 H28.9 V22.6 M26.6 24.9 H3 V9.4" fill="none" stroke="#e4e4e4" stroke-width="2.4" /><rect x="0.80" y="4.80" width="4.4" height="4.4" fill="#8cc4f4"/><rect x="26.70" y="22.70" width="4.4" height="4.4" fill="#8cc4f4"/><path d="M38 30.2 V38 H30.2 Z" fill="#9c9c9c"/></svg>
<svg class="b" style="left:74px;top:352.0px;" width="32" height="32" viewBox="0 0 32 32"><path d="M3.9 25.6 C4.4 21.4 5.8 18 7.8 14.8" fill="none" stroke="#e4e4e4" stroke-width="2.4" /><path d="M14.2 7.8 C17.6 5.2 21.4 3.8 25.4 3.2" fill="none" stroke="#e4e4e4" stroke-width="2.4" /><rect x="25.80" y="0.90" width="4.4" height="4.4" fill="#8cc4f4"/><rect x="8.90" y="8.80" width="4.4" height="4.4" fill="#8cc4f4"/><rect x="1.70" y="25.90" width="4.4" height="4.4" fill="#8cc4f4"/><path d="M38 30.2 V38 H30.2 Z" fill="#9c9c9c"/></svg>
<svg class="b" style="left:134px;top:352.0px;" width="32" height="32" viewBox="0 0 32 32"><path d="M2.2 27.6 C2.8 21.8 4.2 17.4 6.6 13.6" fill="none" stroke="#e4e4e4" stroke-width="2.4" /><path d="M10.6 11.6 L21.6 21" fill="none" stroke="#e4e4e4" stroke-width="2.4" /><path d="M26.4 18.8 C28.4 14.4 29.6 10 30 4.6" fill="none" stroke="#e4e4e4" stroke-width="2.4" /><rect x="27.80" y="-0.20" width="4.4" height="4.4" fill="#8cc4f4"/><rect x="5.80" y="8.00" width="4.4" height="4.4" fill="#8cc4f4"/><rect x="21.80" y="19.80" width="4.4" height="4.4" fill="#8cc4f4"/><rect x="-0.20" y="27.90" width="4.4" height="4.4" fill="#8cc4f4"/><path d="M38 30.2 V38 H30.2 Z" fill="#9c9c9c"/></svg>
<svg class="b" style="left:14px;top:416.0px;" width="32" height="32" viewBox="0 0 32 32"><path d="M5.9 7.9 H26.1 M5.9 23.9 H26.1" fill="none" stroke="#e4e4e4" stroke-width="2.4" /><path d="M-0.2 16 H12 M13.9 16 H18 M20 16 H32.2" fill="none" stroke="#8cc4f4" stroke-width="2.4" /><path d="M38 30.2 V38 H30.2 Z" fill="#9c9c9c"/></svg>
<svg class="b" style="left:74px;top:416.0px;" width="32" height="32" viewBox="0 0 32 32"><path d="M6.6 25.4 L13 19 M19.2 12.8 L25.6 6.4" fill="none" stroke="#dadada" stroke-width="2.6" /><path d="M32.4 -0.1 L29.6 10.2 L22.2 2.8 Z" fill="#dadada"/><path d="M-0.3 32.1 L2.6 21.8 L10 29.2 Z" fill="#dadada"/><rect x="13.85" y="13.85" width="4.4" height="4.4" fill="#8cc4f4"/><path d="M38 30.2 V38 H30.2 Z" fill="#9c9c9c"/></svg>
<svg class="b" style="left:134px;top:416.0px;" width="32" height="32" viewBox="0 0 32 32"><path d="M27.24 19.37 A13.2 9 0 1 1 10.92 7.44 M19.08 7.44 A13.2 9 0 0 1 27.24 12.63" fill="none" stroke="#e4e4e4" stroke-width="2.2" /><rect x="12.90" y="4.90" width="4.4" height="4.4" fill="#8cc4f4"/><rect x="12.90" y="13.85" width="4.4" height="4.4" fill="#8cc4f4"/><rect x="25.90" y="13.85" width="4.4" height="4.4" fill="#8cc4f4"/><path d="M38 30.2 V38 H30.2 Z" fill="#9c9c9c"/></svg>
<svg class="b" style="left:14px;top:480.0px;" width="32" height="32" viewBox="0 0 32 32"><path d="M4.6 6.5 A3.3 3.3 0 0 1 10.30 6.5 A3.3 3.3 0 0 1 16.00 6.5 A3.3 3.3 0 0 1 21.70 6.5 A3.3 3.3 0 0 1 27.40 6.5 A3.2 3.2 0 0 1 29.5 8.8 A2.9 2.9 0 0 1 29.5 13.53 A2.9 2.9 0 0 1 29.5 18.27 A2.9 2.9 0 0 1 29.5 23.00 A3.2 3.2 0 0 1 27.4 25.3 A3.3 3.3 0 0 1 21.70 25.3 A3.3 3.3 0 0 1 16.00 25.3 A3.3 3.3 0 0 1 10.30 25.3 A3.3 3.3 0 0 1 4.60 25.3 A3.2 3.2 0 0 1 2.5 23.0 A2.9 2.9 0 0 1 2.5 18.27 A2.9 2.9 0 0 1 2.5 13.53 A2.9 2.9 0 0 1 2.5 8.80 A3.2 3.2 0 0 1 4.6 6.5 Z" fill="none" stroke="#e4e4e4" stroke-width="2.2" /><path d="M38 30.2 V38 H30.2 Z" fill="#9c9c9c"/></svg>
<svg class="b" style="left:74px;top:480.0px;" width="32" height="32" viewBox="0 0 32 32"><path d="M0.8 1.2 L12.6 12.6 M31.2 1.2 L19.6 12.6 M0.8 31 L12.6 19.6" fill="none" stroke="#e4e4e4" stroke-width="2.2" /><rect x="13.85" y="13.80" width="4.4" height="4.4" fill="#8cc4f4"/><path d="M38 30.2 V38 H30.2 Z" fill="#9c9c9c"/></svg>
<svg class="b" style="left:134px;top:480.0px;" width="32" height="32" viewBox="0 0 32 32"><path d="M-0.1 14.9 H8.2 L13.2 4.2 L18.2 28 L24.2 14.9 H32" fill="none" stroke="#e4e4e4" stroke-width="2.2" /></svg>
<div class="b" style="left:8px;top:538.0px;width:164px;height:2px;background:#232a35;"></div>
<div class="t" style="left:34.6px;top:551.9px;font-size:20px;line-height:20px;color:#f2f2f2;letter-spacing:-0.025px;-webkit-text-stroke:.3px #f2f2f2;">Hatch</div>
<svg class="b" style="left:8.4px;top:560.2px;" width="17" height="9" viewBox="0 0 17 9"><path d="M0 0 H16.8 L8.4 8.6 Z" fill="#ececec"/></svg>
<svg class="b" style="left:150px;top:553.4px;" width="20" height="20" viewBox="0 0 20 20"><polygon points="19.17,8.43 19.17,11.57 16.44,11.85 15.86,13.24 17.59,15.37 15.37,17.59 13.24,15.86 11.85,16.44 11.57,19.17 8.43,19.17 8.15,16.44 6.76,15.86 4.63,17.59 2.41,15.37 4.14,13.24 3.56,11.85 0.83,11.57 0.83,8.43 3.56,8.15 4.14,6.76 2.41,4.63 4.63,2.41 6.76,4.14 8.15,3.56 8.43,0.83 11.57,0.83 11.85,3.56 13.24,4.14 15.37,2.41 17.59,4.63 15.86,6.76 16.44,8.15" fill="#f0f0f0"/><circle cx="10" cy="10" r="2.51" fill="#3b4453"/></svg>
<svg class="b" style="left:14px;top:596.0px;" width="32" height="32" viewBox="0 0 32 32"><path d="M5 0 V32 M27 0 V32 M0 5 H32 M0 27.2 H32" fill="none" stroke="#e4e4e4" stroke-width="2.2" /><defs><clipPath id="hc"><rect x="7.8" y="7.8" width="16.6" height="16.8"/></clipPath></defs><rect x="6.2" y="6.2" width="19.6" height="19.8" fill="#333b48"/><g clip-path="url(#hc)" stroke="#8cc4f4" stroke-width="2.2"><path d="M2 14 L14 2 M2 19.6 L19.6 2 M2 25.2 L25.2 2 M2 30.8 L30.8 2 M7.6 30.8 L30.8 7.6 M13.2 30.8 L30.8 13.2 M18.8 30.8 L30.8 18.8"/></g></svg>
<svg class="b" style="left:74px;top:596.0px;" width="32" height="32" viewBox="0 0 32 32"><path d="M5 0 V32 M27 0 V32 M0 5 H32 M0 27.2 H32" fill="none" stroke="#e4e4e4" stroke-width="2.2" /><defs><clipPath id="hc"><rect x="7.8" y="7.8" width="16.6" height="16.8"/></clipPath></defs><rect x="6.2" y="6.2" width="19.6" height="19.8" fill="#333b48"/><g clip-path="url(#hc)" stroke="#8cc4f4" stroke-width="2.2"><path d="M2 14 L14 2 M2 19.6 L19.6 2 M2 25.2 L25.2 2 M2 30.8 L30.8 2 M7.6 30.8 L30.8 7.6 M13.2 30.8 L30.8 13.2 M18.8 30.8 L30.8 18.8"/></g><rect x="8.6" y="1" width="15" height="7" fill="#3b4453"/><path d="M9.8 6.2 L11.8 2.2 H20.2 L22.2 6.2 Z" fill="#ffffff"/><path d="M38 30.2 V38 H30.2 Z" fill="#9c9c9c"/></svg>
<svg class="b" style="left:134px;top:596.0px;" width="32" height="32" viewBox="0 0 32 32"><path d="M5 0 V32 M27 0 V32 M0 5 H32 M0 27.2 H32" fill="none" stroke="#e4e4e4" stroke-width="2.2" /><defs><linearGradient id="gr" x1="0" y1="0" x2="0" y2="1"><stop offset="0" stop-color="#8cc8fb"/><stop offset=".45" stop-color="#7d9fc2"/><stop offset="1" stop-color="#3e4756"/></linearGradient></defs><rect x="6.2" y="6.2" width="19.6" height="19.8" fill="#333b48"/><rect x="7.8" y="8" width="16.4" height="16.4" fill="url(#gr)"/></svg>
<svg class="b" style="left:14px;top:660.0px;" width="32" height="32" viewBox="0 0 32 32"><path d="M5 0 V32 M27 0 V32 M0 5 H32 M0 27.2 H32" fill="none" stroke="#8cc4f4" stroke-width="2.2" /></svg>
<svg class="b" style="left:74px;top:660.0px;" width="32" height="32" viewBox="0 0 32 32"><defs><clipPath id="rc"><rect x="0" y="0" width="32.2" height="32.2"/></clipPath></defs><g clip-path="url(#rc)" stroke="#dadada" stroke-width="2.6"><path d="M-4 6 L6 -4 M-4 12.4 L12.4 -4 M-4 18.8 L18.8 -4 M-4 25.2 L25.2 -4 M-4 31.6 L31.6 -4 M-4 38 L38 -4 M2.4 38 L38 2.4 M8.8 38 L38 8.8 M15.2 38 L38 15.2 M21.6 38 L38 21.6 M28 38 L38 28"/></g><rect x="4.6" y="6.6" width="22.8" height="18.8" fill="#333b48"/><path d="M6.1 8.1 H17.9 V13.9 H26.1 V24 H6.1 Z" fill="#9ccbf4"/></svg>
<svg class="b" style="left:134px;top:660.0px;" width="32" height="32" viewBox="0 0 32 32"><path d="M-0.1 3.1 H19.7 L32 14.9 V28.9 H-0.1 Z" fill="#dadada"/><circle cx="15" cy="15.8" r="5" fill="#3f4756"/></svg>
<div class="b" style="left:8px;top:718.0px;width:164px;height:2px;background:#232a35;"></div>
<div class="t" style="left:34.6px;top:731.9px;font-size:20px;line-height:20px;color:#f2f2f2;letter-spacing:0.100px;-webkit-text-stroke:.3px #f2f2f2;">Block</div>
<svg class="b" style="left:8.4px;top:740.2px;" width="17" height="9" viewBox="0 0 17 9"><path d="M0 0 H16.8 L8.4 8.6 Z" fill="#ececec"/></svg>
<svg class="b" style="left:150px;top:733.4px;" width="20" height="20" viewBox="0 0 20 20"><polygon points="19.17,8.43 19.17,11.57 16.44,11.85 15.86,13.24 17.59,15.37 15.37,17.59 13.24,15.86 11.85,16.44 11.57,19.17 8.43,19.17 8.15,16.44 6.76,15.86 4.63,17.59 2.41,15.37 4.14,13.24 3.56,11.85 0.83,11.57 0.83,8.43 3.56,8.15 4.14,6.76 2.41,4.63 4.63,2.41 6.76,4.14 8.15,3.56 8.43,0.83 11.57,0.83 11.85,3.56 13.24,4.14 15.37,2.41 17.59,4.63 15.86,6.76 16.44,8.15" fill="#f0f0f0"/><circle cx="10" cy="10" r="2.51" fill="#3b4453"/></svg>
<svg class="b" style="left:14px;top:776.0px;" width="32" height="32" viewBox="0 0 32 32"><rect x="2.3" y="11.2" width="15.699999999999998" height="13.700000000000001" fill="#6b7382" stroke="#d8d8d8" stroke-width="2.4"/><rect x="-0.19999999999999996" y="23.1" width="4.2" height="4.2" fill="#d8d8d8"/><circle cx="20" cy="25" r="8.4" fill="#3b4453"/><circle cx="20" cy="25" r="5.8" fill="#5f6775" stroke="#d8d8d8" stroke-width="2.4"/><path d="M20.6 25.3 H15.20 A4.80 4.80 0 0 1 20.6 20.20 Z" fill="#6b7382"/><path d="M20.6 19.60 V25.3 H14.60" fill="none" stroke="#d8d8d8" stroke-width="1.7"/><polygon points="23.50,-0.20 24.67,4.79 28.55,1.44 26.57,6.17 31.68,5.74 27.30,8.40 31.68,11.06 26.57,10.63 28.55,15.36 24.67,12.01 23.50,17.00 22.33,12.01 18.45,15.36 20.43,10.63 15.32,11.06 19.70,8.40 15.32,5.74 20.43,6.17 18.45,1.44 22.33,4.79" fill="#f2cd7a" stroke="#3b4453" stroke-width="1"/></svg>
<svg class="b" style="left:74px;top:776.0px;" width="32" height="32" viewBox="0 0 32 32"><path d="M14 -0.1 H25.7 L32.1 6.3 V24 H14 Z" fill="#9ccbf4"/><path d="M25.7 -0.1 V6.3 H32.1 Z" fill="#d3eaff"/><path d="M25.7 -0.1 V6.3 H32.1" fill="none" stroke="#3b4453" stroke-width="1"/><rect x="-0.4" y="10.6" width="21.4" height="17" fill="#3b4453"/><rect x="2.1" y="13.2" width="16.400000000000002" height="11.999999999999998" fill="#6b7382" stroke="#d8d8d8" stroke-width="2.4"/><rect x="-0.3999999999999999" y="23.4" width="4.2" height="4.2" fill="#d8d8d8"/><circle cx="19.1" cy="25" r="8.4" fill="#3b4453"/><circle cx="19.1" cy="25" r="5.8" fill="#5f6775" stroke="#d8d8d8" stroke-width="2.4"/><path d="M19.700000000000003 25.3 H14.30 A4.80 4.80 0 0 1 19.700000000000003 20.20 Z" fill="#6b7382"/><path d="M19.700000000000003 19.60 V25.3 H13.70" fill="none" stroke="#d8d8d8" stroke-width="1.7"/></svg>
<svg class="b" style="left:134px;top:776.0px;" width="32" height="32" viewBox="0 0 32 32"><rect x="3.0" y="9.2" width="21.2" height="15.999999999999998" fill="#6b7382" stroke="#d8d8d8" stroke-width="2.4"/><rect x="-0.10000000000000009" y="23.9" width="4.2" height="4.2" fill="#d8d8d8"/><circle cx="24" cy="24" r="9.4" fill="#3b4453"/><circle cx="24" cy="24" r="6.8" fill="#5f6775" stroke="#d8d8d8" stroke-width="2.4"/><path d="M24.6 24.3 H18.20 A5.80 5.80 0 0 1 24.6 18.20 Z" fill="#6b7382"/><path d="M24.6 17.60 V24.3 H17.60" fill="none" stroke="#d8d8d8" stroke-width="1.7"/><g transform="translate(15.6,15.4) rotate(-40.5)"><path d="M-2.6 0 L5 -5.1 H23.44490787346104 V5.1 H5 Z" fill="#3b4453"/><path d="M0 0 L5.4 -3.3 V3.3 Z" fill="#cfcfcf"/><rect x="5.4" y="-3.3" width="12.84" height="6.6" fill="#f2cd7a"/><path d="M18.24 -3.3 H19.24 A2.8 3.3 0 0 1 19.24 3.3 H18.24 Z" fill="#ec6a60"/></g></svg>
<svg class="b" style="left:14px;top:840.0px;" width="32" height="32" viewBox="0 0 32 32"><g transform="translate(-1,1.1)"><path d="M0.9 1.1 H14.9 L30.9 16.9 L16.9 30.9 L0.9 15.3 Z" fill="#dadada"/><circle cx="7.3" cy="7" r="2.2" fill="#3f4756"/><g stroke="#5a5a5a" stroke-width="2" fill="none"><path d="M12.9 9.5 L23.3 19.5 M10.9 14.7 L18.9 22.3"/><path d="M8.5 12.2 L9.7 13.4" /></g></g><g transform="translate(14,17.2) rotate(-41.0)"><path d="M-2.6 0 L5 -5.0 H25.842524621004305 V5.0 H5 Z" fill="#3b4453"/><path d="M0 0 L5.4 -3.2 V3.2 Z" fill="#cfcfcf"/><rect x="5.4" y="-3.2" width="15.24" height="6.4" fill="#f2cd7a"/><path d="M20.64 -3.2 H21.64 A2.8 3.2 0 0 1 21.64 3.2 H20.64 Z" fill="#ec6a60"/></g><path d="M38 30.2 V38 H30.2 Z" fill="#9c9c9c"/></svg>
<svg class="b" style="left:74px;top:840.0px;" width="32" height="32" viewBox="0 0 32 32"><g transform="translate(0,0)"><path d="M0.9 1.1 H14.9 L30.9 16.9 L16.9 30.9 L0.9 15.3 Z" fill="#dadada"/><circle cx="7.3" cy="7" r="2.2" fill="#3f4756"/><g stroke="#5a5a5a" stroke-width="2" fill="none"><path d="M12.9 9.5 L23.3 19.5 M10.9 14.7 L18.9 22.3"/><path d="M8.5 12.2 L9.7 13.4" /></g></g></svg>
<svg class="b" style="left:134px;top:840.0px;" width="32" height="32" viewBox="0 0 32 32"><rect x="2.5999999999999996" y="11.299999999999999" width="10.399999999999999" height="13.6" fill="#6b7382" stroke="#d8d8d8" stroke-width="2.4"/><rect x="0.10000000000000009" y="23.1" width="4.2" height="4.2" fill="#d8d8d8"/><circle cx="20" cy="25.1" r="8.4" fill="#3b4453"/><circle cx="20" cy="25.1" r="5.8" fill="#5f6775" stroke="#d8d8d8" stroke-width="2.4"/><path d="M20.6 25.400000000000002 H15.20 A4.80 4.80 0 0 1 20.6 20.30 Z" fill="#6b7382"/><path d="M20.6 19.70 V25.400000000000002 H14.60" fill="none" stroke="#d8d8d8" stroke-width="1.7"/><rect x="13" y="-1.1" width="20.2" height="18.2" fill="#3b4453"/><rect x="14" y="-0.1" width="18.2" height="16.2" fill="#f4f4f4"/><rect x="14" y="-0.1" width="18.2" height="4.2" fill="#9a9a9a"/><g fill="#4a5160"><rect x="17.8" y="6.8" width="2.4" height="2"/><rect x="22" y="6.8" width="6.4" height="2"/><rect x="17.8" y="10.8" width="2.4" height="2"/><rect x="22" y="10.8" width="6.4" height="2"/></g></svg>
<svg class="b" style="left:14px;top:904.0px;" width="32" height="32" viewBox="0 0 32 32"><rect x="3.2" y="11.2" width="9.6" height="13.6" fill="#6b7382" stroke="#d8d8d8" stroke-width="2.4"/><rect x="0.6999999999999997" y="23.0" width="4.2" height="4.2" fill="#d8d8d8"/><circle cx="20" cy="25" r="8.4" fill="#3b4453"/><circle cx="20" cy="25" r="5.8" fill="#5f6775" stroke="#d8d8d8" stroke-width="2.4"/><path d="M20.6 25.3 H15.20 A4.80 4.80 0 0 1 20.6 20.20 Z" fill="#6b7382"/><path d="M20.6 19.60 V25.3 H14.60" fill="none" stroke="#d8d8d8" stroke-width="1.7"/><rect x="15" y="-1.1" width="18" height="18" fill="#3b4453"/><path d="M16 -0.1 H32 V16 H17.2 L16 14.8 Z" fill="#b4b4b4"/><rect x="20" y="-0.1" width="8" height="5.6" fill="#f4f4f4"/><rect x="20" y="11" width="8" height="5" fill="#f4f4f4"/><rect x="21.2" y="12.2" width="1.2" height="2.6" fill="#444c5a"/></svg>
<svg class="b" style="left:74px;top:904.0px;" width="32" height="32" viewBox="0 0 32 32"><rect x="1.3" y="1.2" width="25.6" height="25.5" fill="#6f7583" stroke="#e0e0e0" stroke-width="2.4"/><path d="M22.6 19 H29.6 V22.6 H33.2 V29.4 H29.6 V33 H22.6 V29.4 H19 V22.6 H22.6 Z" fill="#3b4453"/><path d="M23.8 20 H28.4 V23.7 H32.1 V28.3 H28.4 V32 H23.8 V28.3 H20.1 V23.7 H23.8 Z" fill="#8cc4f4"/></svg>
<svg class="b" style="left:134px;top:904.0px;" width="32" height="32" viewBox="0 0 32 32"><g transform="translate(-1,0.9)"><path d="M0.9 1.1 H14.9 L30.9 16.9 L16.9 30.9 L0.9 15.3 Z" fill="#dadada"/><circle cx="7.3" cy="7" r="2.2" fill="#3f4756"/><g stroke="#5a5a5a" stroke-width="2" fill="none"><path d="M12.9 9.5 L23.3 19.5 M10.9 14.7 L18.9 22.3"/><path d="M8.5 12.2 L9.7 13.4" /></g></g><circle cx="24" cy="6.8" r="8.600000000000001" fill="#3b4453"/><path d="M18.65 6.05 A5.4 5.4 0 0 1 28.01 3.19" fill="none" stroke="#7ed98f" stroke-width="2.4"/><path d="M29.40 6.80 L25.46 5.29 L30.04 0.54 Z" fill="#7ed98f"/><path d="M29.35 7.55 A5.4 5.4 0 0 1 19.99 10.41" fill="none" stroke="#7ed98f" stroke-width="2.4"/><path d="M18.60 6.80 L22.54 8.31 L17.96 13.06 Z" fill="#7ed98f"/></svg>
<svg class="b" style="left:14px;top:968.0px;" width="32" height="32" viewBox="0 0 32 32"><g transform="translate(-1,1.1)"><path d="M0.9 1.1 H14.9 L30.9 16.9 L16.9 30.9 L0.9 15.3 Z" fill="#dadada"/><circle cx="7.3" cy="7" r="2.2" fill="#3f4756"/><g stroke="#5a5a5a" stroke-width="2" fill="none"><path d="M12.9 9.5 L23.3 19.5 M10.9 14.7 L18.9 22.3"/><path d="M8.5 12.2 L9.7 13.4" /></g></g><rect x="14.8" y="-1" width="18.4" height="18.2" fill="#3b4453"/><rect x="20" y="4.6" width="8" height="7.6" fill="#6fa8e0"/><g fill="#8cc4f4"><rect x="20" y="0.1" width="8" height="1.9"/><rect x="20" y="14.1" width="8" height="1.9"/><rect x="16" y="4.1" width="2" height="8"/><rect x="30" y="4.1" width="2" height="8"/></g></svg>
<svg class="b" style="left:74px;top:968.0px;" width="32" height="32" viewBox="0 0 32 32"><rect x="3.3" y="1.3" width="11.600000000000001" height="7.6" fill="#6b7382" stroke="#d8d8d8" stroke-width="2.4"/><rect x="-0.20000000000000018" y="8.0" width="4.2" height="4.2" fill="#d8d8d8"/><circle cx="15.1" cy="9.1" r="6.4" fill="#3b4453"/><circle cx="15.1" cy="9.1" r="3.8" fill="#5f6775" stroke="#d8d8d8" stroke-width="2.4"/><path d="M15.7 9.4 H12.30 A2.80 2.80 0 0 1 15.7 6.30 Z" fill="#6b7382"/><path d="M15.7 5.70 V9.4 H11.70" fill="none" stroke="#d8d8d8" stroke-width="1.7"/><path d="M31.9 12.1 V4.9 H26" fill="none" stroke="#f6f6f6" stroke-width="2.4" /><path d="M21.6 4.9 L27 1 V8.8 Z" fill="#f6f6f6"/><rect x="11.299999999999999" y="17.3" width="13.6" height="9.6" fill="#4e6788" stroke="#8cc4f4" stroke-width="2.4"/><rect x="7.9" y="26.0" width="4.2" height="4.2" fill="#8cc4f4"/><circle cx="26.1" cy="26.1" r="8.4" fill="#3b4453"/><circle cx="26.1" cy="26.1" r="5.8" fill="#5f6775" stroke="#8cc4f4" stroke-width="2.4"/><path d="M26.700000000000003 26.400000000000002 H21.30 A4.80 4.80 0 0 1 26.700000000000003 21.30 Z" fill="#4e6788"/><path d="M26.700000000000003 20.70 V26.400000000000002 H20.70" fill="none" stroke="#8cc4f4" stroke-width="1.7"/></svg>
<div class="b" style="left:8px;top:1026.0px;width:164px;height:2px;background:#232a35;"></div>
<div class="t" style="left:34.6px;top:1039.9px;font-size:20px;line-height:20px;color:#f2f2f2;letter-spacing:0.300px;-webkit-text-stroke:.3px #f2f2f2;">Modify</div>
<svg class="b" style="left:8.4px;top:1048.2px;" width="17" height="9" viewBox="0 0 17 9"><path d="M0 0 H16.8 L8.4 8.6 Z" fill="#ececec"/></svg>
<svg class="b" style="left:150px;top:1041.4px;" width="20" height="20" viewBox="0 0 20 20"><polygon points="19.17,8.43 19.17,11.57 16.44,11.85 15.86,13.24 17.59,15.37 15.37,17.59 13.24,15.86 11.85,16.44 11.57,19.17 8.43,19.17 8.15,16.44 6.76,15.86 4.63,17.59 2.41,15.37 4.14,13.24 3.56,11.85 0.83,11.57 0.83,8.43 3.56,8.15 4.14,6.76 2.41,4.63 4.63,2.41 6.76,4.14 8.15,3.56 8.43,0.83 11.57,0.83 11.85,3.56 13.24,4.14 15.37,2.41 17.59,4.63 15.86,6.76 16.44,8.15" fill="#f0f0f0"/><circle cx="10" cy="10" r="2.51" fill="#3b4453"/></svg>
<svg class="b" style="left:14px;top:1084.0px;" width="32" height="32" viewBox="0 0 32 32"><path d="M16 0.8 L21.4 9 H17.3 V14.3 H22.8 V10.2 L31.3 15.6 L22.8 21 V16.9 H17.3 V22.4 H21.4 L16 31.3 L10.6 22.4 H14.7 V16.9 H9.2 V21 L0.8 15.6 L9.2 10.2 V14.3 H14.7 V9 H10.6 Z" fill="#ffffff"/></svg>
<svg class="b" style="left:74px;top:1084.0px;" width="32" height="32" viewBox="0 0 32 32"><circle cx="6.9" cy="7" r="5.8" fill="none" stroke="#dadada" stroke-width="2.4"/><path d="M16.1 2.9 H24.9 V9" fill="none" stroke="#f6f6f6" stroke-width="2.4" /><path d="M20.8 8 H29 L24.9 14.2 Z" fill="#f6f6f6"/><circle cx="15.1" cy="25" r="5.8" fill="none" stroke="#8cc4f4" stroke-width="2.6"/><path d="M22.6 19.6 A5.8 5.8 0 1 1 22.6 30.4" fill="none" stroke="#8cc4f4" stroke-width="2.6" /></svg>
<svg class="b" style="left:134px;top:1084.0px;" width="32" height="32" viewBox="0 0 32 32"><path fill-rule="evenodd" d="M1.4 29.7 H15 V2.4 Z M5.3 27.3 H12.6 V12.6 Z" fill="#dadada"/><path fill-rule="evenodd" d="M30.9 29.7 H17 V2.4 Z M26.9 27.3 H19.4 V12.6 Z" fill="#8cc4f4"/></svg>
<svg class="b" style="left:14px;top:1148.0px;" width="32" height="32" viewBox="0 0 32 32"><path d="M29.2 16.6 A13 13 0 1 1 15.2 4.8" fill="none" stroke="#ffffff" stroke-width="2.6" /><path d="M15.6 -0.6 L23.9 4.9 L15.6 10.4 Z" fill="#ffffff"/></svg>
<svg class="b" style="left:74px;top:1148.0px;" width="32" height="32" viewBox="0 0 32 32"><path d="M3.4 3.4 H20.8 V12 M3.4 3.4 V20.8 H12" fill="none" stroke="#e4e4e4" stroke-width="2" /><rect x="1.20" y="1.20" width="4.4" height="4.4" fill="#ffffff"/><rect x="9.90" y="1.20" width="4.4" height="4.4" fill="#ffffff"/><rect x="18.60" y="1.20" width="4.4" height="4.4" fill="#ffffff"/><rect x="1.20" y="9.90" width="4.4" height="4.4" fill="#ffffff"/><rect x="9.90" y="9.90" width="4.4" height="4.4" fill="#ffffff"/><rect x="1.20" y="18.60" width="4.4" height="4.4" fill="#ffffff"/><rect x="9.90" y="18.60" width="4.4" height="4.4" fill="#ffffff"/><path d="M18 12.2 V32.2 L22.8 26.8 L32.2 25.8 Z" fill="#ffffff" stroke="#3b4453" stroke-width="1.4"/><path d="M25.8 10.9 H32 M28.9 7.8 V14" fill="none" stroke="#ffffff" stroke-width="2" /></svg>
<svg class="b" style="left:134px;top:1148.0px;" width="32" height="32" viewBox="0 0 32 32"><path d="M0 2.9 H4 M5.9 2.9 H9.9 M11.8 2.9 H15.8" fill="none" stroke="#8cc4f4" stroke-width="2.4" /><path d="M24.2 2.9 H32" fill="none" stroke="#e4e4e4" stroke-width="2.4" /><path d="M18.6 0 L22 3.4 L21 18.6 L18.4 19.6 Z" fill="#ffffff"/><path d="M7.6 6.6 L8.6 10.6 L17.6 19.8 L20 17.6 Z" fill="#ffffff"/><ellipse cx="16.8" cy="26.6" rx="3.4" ry="4.6" transform="rotate(20 16.8 26.6)" fill="none" stroke="#ffffff" stroke-width="2.2"/><ellipse cx="24.8" cy="24" rx="3.4" ry="4.6" transform="rotate(-48 24.8 24)" fill="none" stroke="#ffffff" stroke-width="2.2"/><circle cx="18.8" cy="18.9" r="1" fill="#3b4453"/><path d="M38 30.2 V38 H30.2 Z" fill="#9c9c9c"/></svg>
<svg class="b" style="left:14px;top:1212.0px;" width="32" height="32" viewBox="0 0 32 32"><path d="M0.9 17 A17 16 0 0 1 18 1" fill="none" stroke="#8cc4f4" stroke-width="2.4" /><path d="M0.9 20.2 V31.9 M20 1 H32.1" fill="none" stroke="#e4e4e4" stroke-width="2.4" /><path d="M38 30.2 V38 H30.2 Z" fill="#9c9c9c"/></svg>
<svg class="b" style="left:74px;top:1212.0px;" width="32" height="32" viewBox="0 0 32 32"><path d="M32.1 4.8 H12 A11.1 11.1 0 0 0 12 27 H32.1" fill="none" stroke="#8cc4f4" stroke-width="2.4" /><path d="M32.1 11 H11.4 A5 5 0 0 0 11.4 21 H32.1" fill="none" stroke="#e4e4e4" stroke-width="2.4" /></svg>
<svg class="b" style="left:134px;top:1212.0px;" width="32" height="32" viewBox="0 0 32 32"><rect x="2" y="1.8" width="12" height="12.2" fill="#dadada"/><rect x="17.8" y="1.8" width="12.2" height="12.2" fill="#9ccbf4"/><rect x="2" y="18" width="12" height="12" fill="#9ccbf4"/><rect x="17.8" y="18" width="12.2" height="12" fill="#9ccbf4"/><path d="M38 30.2 V38 H30.2 Z" fill="#9c9c9c"/></svg>
<svg class="b" style="left:14px;top:1276.0px;" width="32" height="32" viewBox="0 0 32 32"><rect x="5.2" y="13.1" width="15.6" height="15.7" fill="none" stroke="#e4e4e4" stroke-width="2.4"/><path d="M0.9 11.9 V30" fill="none" stroke="#8cc4f4" stroke-width="2.4" /><path d="M7 8.4 L12.2 3.4 H27.4 L22.6 8.4 Z" fill="none" stroke="#8cc4f4" stroke-width="2.4"/><path d="M25.4 12.2 L30.9 7 V21.8 L25.4 27.4 Z" fill="none" stroke="#8cc4f4" stroke-width="2.4"/></svg>
<svg class="b" style="left:74px;top:1276.0px;" width="32" height="32" viewBox="0 0 32 32"><path d="M16.1 2.3 H20.8 L30.2 29.9 H16.1" fill="none" stroke="#8cc4f4" stroke-width="2.4" /><rect x="1.3" y="1.3" width="11.6" height="29.5" fill="none" stroke="#e4e4e4" stroke-width="2.4"/><path d="M6.8 20.4 H15.4 V17.6 L23.8 23.1 L15.4 28.6 V25.8 H6.8 Z" fill="#3b4453"/><path d="M7.9 21.8 H16.6 V19 L22.6 23.1 L16.6 27.2 V24.4 H7.9 Z" fill="#ffffff"/></svg>
<svg class="b" style="left:134px;top:1276.0px;" width="32" height="32" viewBox="0 0 32 32"><path d="M0 4.4 L4.4 0.1 H18 V13.6 L13.6 18 H0 Z" fill="#dadada"/><path d="M0 4.4 L4.4 0.1 H18 L13.6 4.4 Z" fill="#f2f2f2"/><path d="M13.6 4.4 L18 0.1 V13.6 L13.6 18 Z" fill="#bcbcbc"/><rect x="17.8" y="18" width="14.4" height="14" fill="#9ccbf4"/><path d="M3.1 20.3 V25.2 H9.6" fill="none" stroke="#ffffff" stroke-width="2.4" /><path d="M8.6 21.4 L13.2 25.2 L8.6 29 Z" fill="#ffffff"/></svg>
<svg class="b" style="left:14px;top:1340.0px;" width="32" height="32" viewBox="0 0 32 32"><path d="M0.9 11.9 V0.9 H31 V31 H20" fill="none" stroke="#8cc4f4" stroke-width="2.4" /><rect x="1.2" y="15.2" width="15.6" height="15.5" fill="none" stroke="#e4e4e4" stroke-width="2.4"/></svg>
<svg class="b" style="left:74px;top:1340.0px;" width="32" height="32" viewBox="0 0 32 32"><path d="M0.7 31.1 L13.4 18.5 M18 13.9 L31.6 0.5" fill="none" stroke="#e4e4e4" stroke-width="2.4" /><path d="M9.7 9.7 L21.7 21.5" fill="none" stroke="#8cc4f4" stroke-width="2.4" /><path d="M38 30.2 V38 H30.2 Z" fill="#9c9c9c"/></svg>
<svg class="b" style="left:134px;top:1340.0px;" width="32" height="32" viewBox="0 0 32 32"><path d="M-0.1 16 H7.4 M24.6 16 H32" fill="none" stroke="#e4e4e4" stroke-width="2.4" /><path d="M7 11.2 L15 16 L7 20.8 Z" fill="#8cc4f4"/><path d="M25 11.2 L17 16 L25 20.8 Z" fill="#8cc4f4"/></svg>
<svg class="b" style="left:14px;top:1404.0px;" width="32" height="32" viewBox="0 0 32 32"><rect x="-0.2" y="2.1" width="20.2" height="15.6" fill="#bdbdbd"/><rect x="11" y="13.1" width="22" height="17.8" fill="#3b4453"/><rect x="13.2" y="15.3" width="17.6" height="13.4" fill="#4a5262" stroke="#e4e4e4" stroke-width="2.4"/><path d="M16 18.1 V25.7 H23.7 Z" fill="#bdbdbd"/><path d="M22 4.9 H29.7 V8.4" fill="none" stroke="#ffffff" stroke-width="2.4" /><path d="M26.2 7.6 H33.2 L29.7 12.6 Z" fill="#ffffff"/><path d="M10 26.9 H3.2 V23.8" fill="none" stroke="#ffffff" stroke-width="2.4" /><path d="M-0.3 24.6 H6.7 L3.2 19.6 Z" fill="#ffffff"/></svg>
<svg class="b" style="left:74px;top:1404.0px;" width="32" height="32" viewBox="0 0 32 32"><rect x="2.5" y="1.3" width="15.199999999999998" height="11.2" fill="#6b7382" stroke="#d8d8d8" stroke-width="2.4"/><rect x="-0.20000000000000018" y="10.8" width="4.2" height="4.2" fill="#d8d8d8"/><circle cx="18" cy="12.9" r="8.4" fill="#3b4453"/><circle cx="18" cy="12.9" r="5.8" fill="#5f6775" stroke="#d8d8d8" stroke-width="2.4"/><path d="M18.6 13.200000000000001 H13.20 A4.80 4.80 0 0 1 18.6 8.10 Z" fill="#6b7382"/><path d="M18.6 7.50 V13.200000000000001 H12.60" fill="none" stroke="#d8d8d8" stroke-width="1.7"/><path d="M4.9 20.1 V26.9 H12.6" fill="none" stroke="#ffffff" stroke-width="2.4" /><path d="M11.6 22.8 L16.8 26.9 L11.6 31 Z" fill="#ffffff"/><circle cx="26.1" cy="26.1" r="4.8" fill="none" stroke="#8cc4f4" stroke-width="2.6"/></svg>
<svg class="b" style="left:134px;top:1404.0px;" width="32" height="32" viewBox="0 0 32 32"><rect x="14.6" y="0.1" width="2.4" height="19" fill="#d9ab6f"/><path d="M14.4 18.4 H17.2 L19.4 21.9 H12.2 Z" fill="#d9ab6f"/><path d="M11.4 23.7 H20.2 L25.4 32.1 H6.6 Z" fill="#f5d586"/></svg>
<div class="b" style="left:8px;top:1462.0px;width:164px;height:2px;background:#232a35;"></div>
<div class="t" style="left:34.6px;top:1475.9px;font-size:20px;line-height:20px;color:#f2f2f2;letter-spacing:-0.467px;-webkit-text-stroke:.3px #f2f2f2;">Text</div>
<svg class="b" style="left:8.4px;top:1484.2px;" width="17" height="9" viewBox="0 0 17 9"><path d="M0 0 H16.8 L8.4 8.6 Z" fill="#ececec"/></svg>
<svg class="b" style="left:150px;top:1477.4px;" width="20" height="20" viewBox="0 0 20 20"><polygon points="19.17,8.43 19.17,11.57 16.44,11.85 15.86,13.24 17.59,15.37 15.37,17.59 13.24,15.86 11.85,16.44 11.57,19.17 8.43,19.17 8.15,16.44 6.76,15.86 4.63,17.59 2.41,15.37 4.14,13.24 3.56,11.85 0.83,11.57 0.83,8.43 3.56,8.15 4.14,6.76 2.41,4.63 4.63,2.41 6.76,4.14 8.15,3.56 8.43,0.83 11.57,0.83 11.85,3.56 13.24,4.14 15.37,2.41 17.59,4.63 15.86,6.76 16.44,8.15" fill="#f0f0f0"/><circle cx="10" cy="10" r="2.51" fill="#3b4453"/></svg>
<svg class="b" style="left:14px;top:1520.0px;" width="32" height="32" viewBox="0 0 32 32"><text x="16" y="30" font-family="Liberation Sans, sans-serif" font-size="39.2" fill="#dadada" stroke="#dadada" stroke-width="0.7" text-anchor="middle">A</text></svg>
<svg class="b" style="left:74px;top:1520.0px;" width="32" height="32" viewBox="0 0 32 32"><text x="9.7" y="24" font-family="Liberation Sans, sans-serif" font-size="33.6" fill="#dadada" stroke="#dadada" stroke-width="0.7" text-anchor="middle">A</text><path d="M24.9 24.4 L31.7 18" stroke="#3b4453" stroke-width="5.4"/><path d="M25.6 23.8 L31 18.6" stroke="#ffffff" stroke-width="3.2"/><path d="M24.4 22.4 C21 22.6 18 25.6 14.1 31.9 C19.6 32.2 25 30.4 26.4 24.4 Z" fill="#d9ab6f" stroke="#3b4453" stroke-width=".8"/></svg>
<svg class="b" style="left:134px;top:1520.0px;" width="32" height="32" viewBox="0 0 32 32"><text x="16" y="28" font-family="Liberation Sans, sans-serif" font-size="39.2" fill="#dadada" stroke="#dadada" stroke-width="0.7" text-anchor="middle">A</text><rect x="0" y="30" width="32.2" height="2.1" fill="#8cc4f4"/></svg>
<svg class="b" style="left:14px;top:1584.0px;" width="32" height="32" viewBox="0 0 32 32"><rect x="-0.2" y="0.1" width="22.1" height="24" fill="#dadada"/><g fill="#5a5a5a"><rect x="4.4" y="4.4" width="13.6" height="1.9"/><rect x="4.4" y="8.2" width="13.6" height="1.9"/><rect x="4.4" y="12" width="13.6" height="1.9"/></g><path d="M24.3 2.9 H29.3 V8.4" fill="none" stroke="#ffffff" stroke-width="2.4" /><path d="M25.8 7.6 H32.8 L29.3 12.8 Z" fill="#ffffff"/><g stroke="#3b4453" stroke-width="3.4" stroke-linejoin="round"><text x="23.2" y="32.1" font-family="Liberation Sans, sans-serif" font-size="24.6" fill="#ffffff" stroke="#ffffff" stroke-width="0.7" text-anchor="middle">A</text></g><text x="23.2" y="32.1" font-family="Liberation Sans, sans-serif" font-size="24.6" fill="#ffffff" stroke="#ffffff" stroke-width="0.7" text-anchor="middle">A</text></svg>
<svg class="b" style="left:74px;top:1584.0px;" width="32" height="32" viewBox="0 0 32 32"><text x="0.6" y="12.1" font-family="Liberation Sans, sans-serif" font-size="14" font-weight="bold" letter-spacing="0.9" fill="#dadada">ABC</text><path d="M6.5 22.9 L12.9 28.9 L24.9 16.1" fill="none" stroke="#7ed98f" stroke-width="4.4" /></svg>
<svg class="b" style="left:134px;top:1584.0px;" width="32" height="32" viewBox="0 0 32 32"><circle cx="13" cy="13.1" r="11.9" fill="none" stroke="#ffffff" stroke-width="2.4"/><text x="13" y="18.9" font-family="Liberation Sans, sans-serif" font-size="19.6" fill="#f2f2f2" stroke="#f2f2f2" stroke-width="0.7" text-anchor="middle">A</text><path d="M22.4 22.8 L31.2 31.2" stroke="#d9ab6f" stroke-width="3.2" stroke-linecap="round"/></svg>
<svg class="b" style="left:14px;top:1648.0px;" width="32" height="32" viewBox="0 0 32 32"><rect x="8" y="14" width="24" height="8" fill="#9ccbf4"/><rect x="8" y="24" width="24" height="7.9" fill="#dadada"/><rect x="-1" y="-0.9" width="19.8" height="19.8" fill="#3b4453"/><rect x="-0.2" y="-0.1" width="18.2" height="18.1" fill="#f2f2f2"/><g fill="#2f7be0"><rect x="4" y="4.1" width="2" height="1.9"/><rect x="8" y="4.1" width="6.2" height="1.9"/><rect x="4" y="8.1" width="2" height="1.9"/><rect x="8" y="8.1" width="6.2" height="1.9"/><rect x="4" y="12.1" width="2" height="1.9"/><rect x="8" y="12.1" width="6.2" height="1.9"/></g><text x="25" y="12" font-family="Liberation Sans, sans-serif" font-size="16.8" font-weight="bold" fill="#8cc4f4" stroke="#8cc4f4" stroke-width="0" text-anchor="middle">A</text></svg>
<svg class="b" style="left:74px;top:1648.0px;" width="32" height="32" viewBox="0 0 32 32"><rect x="-0.1" y="14" width="24.200000000000003" height="8" fill="#9ccbf4"/><rect x="-0.1" y="24" width="24.200000000000003" height="7.9" fill="#dadada"/><text x="7" y="12" font-family="Liberation Sans, sans-serif" font-size="16.8" font-weight="bold" fill="#8cc4f4" stroke="#8cc4f4" stroke-width="0" text-anchor="middle">A</text><circle cx="24.1" cy="7" r="8.600000000000001" fill="#3b4453"/><path d="M18.75 6.25 A5.4 5.4 0 0 1 28.11 3.39" fill="none" stroke="#7ed98f" stroke-width="2.4"/><path d="M29.50 7.00 L25.56 5.49 L30.14 0.74 Z" fill="#7ed98f"/><path d="M29.45 7.75 A5.4 5.4 0 0 1 20.09 10.61" fill="none" stroke="#7ed98f" stroke-width="2.4"/><path d="M18.70 7.00 L22.64 8.51 L18.06 13.26 Z" fill="#7ed98f"/></svg>
<svg class="b" style="left:134px;top:1648.0px;" width="32" height="32" viewBox="0 0 32 32"><text x="1.2" y="10" font-family="Liberation Sans, sans-serif" font-size="10.8" font-weight="bold" letter-spacing="1.3" fill="#dadada">PDF</text><path d="M5 14 V23 H10.6" fill="none" stroke="#ffffff" stroke-width="2.4" /><path d="M9.8 19 L15 23 L9.8 27 Z" fill="#ffffff"/><text x="23" y="30" font-family="Liberation Sans, sans-serif" font-size="22.4" fill="#8cc4f4" stroke="#8cc4f4" stroke-width="0.7" text-anchor="middle">A</text></svg>
<svg class="b" style="left:14px;top:1712.0px;" width="32" height="32" viewBox="0 0 32 32"><text x="-0.4" y="8" font-family="Liberation Sans, sans-serif" font-size="10.8" font-weight="bold" letter-spacing="1.3" fill="#dadada">PDF</text><path d="M2.8 12.1 V21.1 H8.4" fill="none" stroke="#ffffff" stroke-width="2.4" /><path d="M7.6 17.1 L12.8 21.1 L7.6 25.1 Z" fill="#ffffff"/><text x="18.4" y="28.1" font-family="Liberation Sans, sans-serif" font-size="22.4" font-style="italic" fill="#cfcfcf" stroke="#cfcfcf" stroke-width="0.7" text-anchor="middle">A</text><path d="M18 30.8 L26.6 23" stroke="#3b4453" stroke-width="6" stroke-linecap="round"/><circle cx="27.4" cy="22" r="5.4" fill="#3b4453"/><path d="M18.4 30.4 L26.4 23.2" stroke="#6fb0f0" stroke-width="3.4" stroke-linecap="round"/><circle cx="27.4" cy="22" r="4.2" fill="#6fb0f0"/><path d="M27.2 21.8 L29.4 16 L33 20 Z" fill="#3b4453"/></svg>
<div class="b" style="left:8px;top:1770.0px;width:164px;height:2px;background:#232a35;"></div>
<div class="t" style="left:34.6px;top:1783.9px;font-size:20px;line-height:20px;color:#f2f2f2;letter-spacing:-0.188px;-webkit-text-stroke:.3px #f2f2f2;">Dimension</div>
<svg class="b" style="left:8.4px;top:1792.2px;" width="17" height="9" viewBox="0 0 17 9"><path d="M0 0 H16.8 L8.4 8.6 Z" fill="#ececec"/></svg>
<svg class="b" style="left:150px;top:1785.4px;" width="20" height="20" viewBox="0 0 20 20"><polygon points="19.17,8.43 19.17,11.57 16.44,11.85 15.86,13.24 17.59,15.37 15.37,17.59 13.24,15.86 11.85,16.44 11.57,19.17 8.43,19.17 8.15,16.44 6.76,15.86 4.63,17.59 2.41,15.37 4.14,13.24 3.56,11.85 0.83,11.57 0.83,8.43 3.56,8.15 4.14,6.76 2.41,4.63 4.63,2.41 6.76,4.14 8.15,3.56 8.43,0.83 11.57,0.83 11.85,3.56 13.24,4.14 15.37,2.41 17.59,4.63 15.86,6.76 16.44,8.15" fill="#f0f0f0"/><circle cx="10" cy="10" r="2.51" fill="#3b4453"/></svg>
<svg class="b" style="left:14px;top:1828.0px;" width="32" height="32" viewBox="0 0 32 32"><path d="M0.9 0 V31.6 M31 0 V31.6" fill="none" stroke="#e4e4e4" stroke-width="2.2" /><path d="M6.8 7.2 H25.299999999999997" stroke="#dadada" stroke-width="1.8"/><path d="M2.7 7.2 L7.3 4.6 V9.8 Z" fill="#dadada"/><path d="M29.4 7.2 L24.799999999999997 4.6 V9.8 Z" fill="#dadada"/><g transform="translate(16,27.2) rotate(-90)"><path d="M6.2 -1.5 L12.2 0 L6.2 1.5 Z" fill="#f2cd7a"/></g><g transform="translate(16,27.2) rotate(-45)"><path d="M6.2 -1.5 L12.2 0 L6.2 1.5 Z" fill="#f2cd7a"/></g><g transform="translate(16,27.2) rotate(-135)"><path d="M6.2 -1.5 L12.2 0 L6.2 1.5 Z" fill="#f2cd7a"/></g><g transform="translate(16,26) rotate(0)"><path d="M5.8 -1.6 L12 -0.3 L5.8 1.2 Z" fill="#f2cd7a"/></g><g transform="translate(16,26) rotate(180)"><path d="M5.8 -1.6 L12 -0.3 L5.8 1.2 Z" fill="#f2cd7a"/></g></svg>
<svg class="b" style="left:74px;top:1828.0px;" width="32" height="32" viewBox="0 0 32 32"><path d="M1.1 13.9 V28 M31 13.9 V28" fill="none" stroke="#e4e4e4" stroke-width="2.2" /><path d="M7.1 21.1 H25.1" stroke="#dadada" stroke-width="1.8"/><path d="M3 21.1 L7.6 18.5 V23.700000000000003 Z" fill="#dadada"/><path d="M29.2 21.1 L24.6 18.5 V23.700000000000003 Z" fill="#dadada"/><path d="M25.2 9.6 L31.4 3.6" stroke="#3b4453" stroke-width="5"/><path d="M25.8 9.2 L30.8 4.2" stroke="#f2f2f2" stroke-width="3"/><path d="M24.6 8.4 C21 8.6 17.8 11.8 14 17.7 C19.4 18 25 16.4 26.6 10.4 Z" fill="#d9ab6f" stroke="#3b4453" stroke-width=".8"/></svg>
<svg class="b" style="left:134px;top:1828.0px;" width="32" height="32" viewBox="0 0 32 32"><path d="M0.9 2 V30.2 M31 2 V30.2" fill="none" stroke="#e4e4e4" stroke-width="2.2" /><path d="M7.0 11 H25.200000000000003" stroke="#8cc4f4" stroke-width="1.8"/><path d="M2.9 11 L7.5 8.4 V13.6 Z" fill="#8cc4f4"/><path d="M29.3 11 L24.700000000000003 8.4 V13.6 Z" fill="#8cc4f4"/><path d="M38 30.2 V38 H30.2 Z" fill="#9c9c9c"/></svg>
<svg class="b" style="left:30px;top:1878px;" width="24" height="24" viewBox="0 0 24 24"><path d="M12 1 V23 M1 12 H23" stroke="#e0e0e0" stroke-width="2" fill="none"/></svg>
<svg class="b" style="left:88px;top:1879px;" width="27" height="22" viewBox="0 0 27 22"><path d="M5.2 1.8 H26.2 M5.2 7.7 H26.2 M5.2 20 H26.2" stroke="#dcdcdc" stroke-width="1.9" fill="none"/><rect x="0" y="11.7" width="18" height="4.3" fill="#dcdcdc"/><path d="M20 15.2 L23 11.6 L26 15.2 Z" fill="#dcdcdc"/></svg>
<div class="b" style="left:180px;top:1864px;width:2756px;height:2px;background:#2a303b;"></div>
<div class="b" style="left:182px;top:1866px;width:118px;height:44px;background:#4f5b72;background:linear-gradient(#525f76,#4b576d);"></div>
<div class="b" style="left:300px;top:1866px;width:1.8px;height:44px;background:#2a303b;"></div>
<div class="b" style="left:301.8px;top:1866px;width:44.2px;height:44px;background:#3e495b;"></div>
<div class="b" style="left:346px;top:1866px;width:1.8px;height:44px;background:#2a303b;"></div>
<div class="b" style="left:347.8px;top:1866px;width:116.6px;height:44px;background:#3e495b;"></div>
<div class="b" style="left:464.4px;top:1866px;width:1.8px;height:44px;background:#2a303b;"></div>
<div class="t" style="left:207.4px;top:1874.7px;font-size:22.2px;line-height:22.2px;color:#f6f6f6;letter-spacing:0.176px;-webkit-text-stroke:.5px #f6f6f6;">Model</div>
<svg class="b" style="left:312px;top:1876px;" width="24" height="24" viewBox="0 0 24 24"><path d="M12 1 V23 M1 12 H23" stroke="#e0e0e0" stroke-width="1.9" fill="none"/></svg>
<div class="t" style="left:392.2px;top:1875.7px;font-size:21px;line-height:21px;color:#a9a9a9;letter-spacing:-0.710px;">a3</div>
<div class="b" style="left:1972px;top:1866px;width:2px;height:44px;background:#2a303b;"></div>
<div class="t" style="left:1995.2px;top:1877.2px;font-size:22px;line-height:22px;color:#c9c9c9;letter-spacing:0.937px;">5.300, -2.254, 0.000</div>
<svg class="b" style="left:0px;top:0px;" width="2940" height="1912" viewBox="0 0 2940 1912"><path d="M2230.1 1873 V1902.8 M2238.4 1873 V1902.8 M2246.4 1873 V1902.8 M2223.2 1881.2 H2252.8 M2223.2 1888.5 H2252.8 M2223.2 1895.7 H2252.8" stroke="#dcdcdc" stroke-width="2" fill="none"/><rect x="2269.6" y="1876.1" width="4.4" height="4.4" fill="#dcdcdc"/><rect x="2269.6" y="1886.1" width="4.4" height="4.4" fill="#dcdcdc"/><rect x="2269.6" y="1895.8" width="4.4" height="4.4" fill="#dcdcdc"/><rect x="2279.9" y="1876.1" width="4.4" height="4.4" fill="#dcdcdc"/><rect x="2279.9" y="1886.1" width="4.4" height="4.4" fill="#dcdcdc"/><rect x="2279.9" y="1895.8" width="4.4" height="4.4" fill="#dcdcdc"/><rect x="2290.1" y="1876.1" width="4.4" height="4.4" fill="#dcdcdc"/><rect x="2290.1" y="1886.1" width="4.4" height="4.4" fill="#dcdcdc"/><rect x="2290.1" y="1895.8" width="4.4" height="4.4" fill="#dcdcdc"/><path d="M2311.4 1872.2 V1902 H2341.9 M2311.4 1893 H2321.6 V1902" stroke="#dcdcdc" stroke-width="2" fill="none"/><circle cx="2367.5" cy="1889" r="12.4" fill="none" stroke="#dcdcdc" stroke-width="2"/><path d="M2385.6 1889 H2367.5 L2382.2 1874.8" stroke="#dcdcdc" stroke-width="2" fill="none"/><path d="M2404.7 1876.8 V1890 M2398.2 1883.4 H2411.2" stroke="#dcdcdc" stroke-width="2" fill="none"/><rect x="2409.8" y="1892.4" width="20.2" height="7.8" fill="#dcdcdc"/><rect x="2411.6" y="1894.2" width="1.6" height="4.2" fill="#3b4453"/><g fill="#dcdcdc"><rect x="2442" y="1875" width="32" height="2"/><rect x="2442" y="1882.6" width="16" height="6.4"/><rect x="2458" y="1884.6" width="16" height="2"/><rect x="2442" y="1893.6" width="16" height="6.8"/><rect x="2458" y="1893.6" width="16" height="2"/></g><rect x="2482.2" y="1868.1" width="40.0" height="39.6" fill="#6b8fc2"/><rect x="2526.1" y="1868.1" width="40.0" height="39.6" fill="#6b8fc2"/><rect x="2614" y="1868.1" width="40.0" height="39.6" fill="#6b8fc2"/><rect x="2657.9" y="1868.1" width="40.0" height="39.6" fill="#6b8fc2"/><rect x="2490" y="1875" width="25" height="25.4" fill="none" stroke="#ffffff" stroke-width="2.2"/><rect x="2492.20" y="1877.20" width="4.12" height="4.2" fill="#ffffff"/><rect x="2492.20" y="1885.60" width="4.12" height="4.2" fill="#ffffff"/><rect x="2492.20" y="1894.00" width="4.12" height="4.2" fill="#ffffff"/><rect x="2496.32" y="1881.40" width="4.12" height="4.2" fill="#ffffff"/><rect x="2496.32" y="1889.80" width="4.12" height="4.2" fill="#ffffff"/><rect x="2500.44" y="1877.20" width="4.12" height="4.2" fill="#ffffff"/><rect x="2500.44" y="1885.60" width="4.12" height="4.2" fill="#ffffff"/><rect x="2500.44" y="1894.00" width="4.12" height="4.2" fill="#ffffff"/><rect x="2504.56" y="1881.40" width="4.12" height="4.2" fill="#ffffff"/><rect x="2504.56" y="1889.80" width="4.12" height="4.2" fill="#ffffff"/><rect x="2508.68" y="1877.20" width="4.12" height="4.2" fill="#ffffff"/><rect x="2508.68" y="1885.60" width="4.12" height="4.2" fill="#ffffff"/><rect x="2508.68" y="1894.00" width="4.12" height="4.2" fill="#ffffff"/><path d="M2538.6 1874.3 H2533.4 V1898.6 H2538.6 M2548.2 1874.3 H2553.4 V1887" stroke="#ffffff" stroke-width="2" fill="none"/><rect x="2539.4" y="1878.2" width="7.6" height="4.6" fill="#bcd4f0"/><circle cx="2542.6" cy="1891.2" r="4.3" fill="#bcd4f0"/><path d="M2551 1886.8 V1902.6 L2554.6 1899.4 L2557.2 1904.4 L2559.6 1903.2 L2557.2 1898.4 L2561.8 1897.6 Z" fill="#ffffff"/><path d="M2598.2 1877.6 L2574 1899 H2606.2" stroke="#dcdcdc" stroke-width="2" fill="none"/><circle cx="2587.4" cy="1887.2" r="2.8" fill="#dcdcdc"/><path d="M2627.6 1878.1 H2648.6 V1901.9 H2622.8 V1882.4" stroke="#ffffff" stroke-width="2" fill="none"/><rect x="2619.6" y="1873.9" width="7" height="7.4" fill="none" stroke="#ffffff" stroke-width="1.8"/><path d="M2676 1872 L2681.9 1885.6 L2680.6 1888.2 L2681.5 1890.4 L2690.2 1903.9 L2676 1896.3 L2661.8 1903.9 L2670.5 1890.4 L2671.4 1888.2 L2670.1 1885.6 Z" fill="#ffffff"/><circle cx="2681.7" cy="1888.1" r="1.5" fill="#6b8fc2"/><circle cx="2670.3" cy="1888.1" r="1.5" fill="#6b8fc2"/><circle cx="2676" cy="1897.5" r="2.0" fill="#6b8fc2"/><circle cx="2688.1" cy="1880" r="6" fill="#ffffff"/><path d="M2720.2 1872 L2726.1 1885.6 L2724.7999999999997 1888.2 L2725.7 1890.4 L2734.3999999999996 1903.9 L2720.2 1896.3 L2706.0 1903.9 L2714.7 1890.4 L2715.6 1888.2 L2714.2999999999997 1885.6 Z" fill="#dcdcdc"/><circle cx="2725.8999999999996" cy="1888.1" r="1.5" fill="#3b4453"/><circle cx="2714.5" cy="1888.1" r="1.5" fill="#3b4453"/><circle cx="2720.2" cy="1897.5" r="2.0" fill="#3b4453"/><path d="M2734.9 1872.4 L2726.1 1880.4 L2731.1 1882.1 L2729.4 1887.5 L2737.8 1880 L2733.2 1878.7 Z" fill="#f5d37e"/><path d="M2766 1872.2 L2771.9 1885.8 L2770.6 1888.4 L2771.5 1890.6000000000001 L2780.2 1904.1000000000001 L2766 1896.5 L2751.8 1904.1000000000001 L2760.5 1890.6000000000001 L2761.4 1888.4 L2760.1 1885.8 Z" fill="#dcdcdc"/><circle cx="2771.7" cy="1888.3" r="1.5" fill="#3b4453"/><circle cx="2760.3" cy="1888.3" r="1.5" fill="#3b4453"/><circle cx="2766" cy="1897.7" r="2.0" fill="#3b4453"/><path d="M2820.4 1884.6 H2832.2 L2826.3 1892.2 Z" fill="#c9c9c9"/><rect x="2851.3" y="1874.2" width="11.2" height="11" fill="none" stroke="#dcdcdc" stroke-width="1.8"/><circle cx="2874.6" cy="1884.6" r="5.6" fill="none" stroke="#dcdcdc" stroke-width="1.8"/><path d="M2857.6 1902 H2869.2 L2863.4 1892.6 Z" fill="none" stroke="#dcdcdc" stroke-width="1.7"/><polygon points="2925.20,1885.55 2925.20,1890.45 2920.98,1891.04 2919.92,1893.62 2922.49,1897.02 2919.02,1900.49 2915.62,1897.92 2913.04,1898.98 2912.45,1903.20 2907.55,1903.20 2906.96,1898.98 2904.38,1897.92 2900.98,1900.49 2897.51,1897.02 2900.08,1893.62 2899.02,1891.04 2894.80,1890.45 2894.80,1885.55 2899.02,1884.96 2900.08,1882.38 2897.51,1878.98 2900.98,1875.51 2904.38,1878.08 2906.96,1877.02 2907.55,1872.80 2912.45,1872.80 2913.04,1877.02 2915.62,1878.08 2919.02,1875.51 2922.49,1878.98 2919.92,1882.38 2920.98,1884.96" fill="#dcdcdc"/><circle cx="2910" cy="1888" r="4.62" fill="#3b4453"/></svg>
<div class="t" style="left:2787.6px;top:1877.6px;font-size:21.6px;line-height:21.6px;color:#a2a2a2;letter-spacing:0.000px;transform:scaleX(.8);transform-origin:0 0;">1:1</div>
<div class="t" style="left:112.6px;top:22.2px;font-size:25.6px;line-height:25.6px;color:#ffffff;letter-spacing:1.146px;font-weight:bold;text-shadow:0 2px 5px rgba(60,40,30,.55);-webkit-text-stroke:.55px #fff;">AutoCAD 2023</div>
<div class="t" style="left:351.5px;top:22.2px;font-size:25.6px;line-height:25.6px;color:#ffffff;letter-spacing:-0.505px;text-shadow:0 2px 5px rgba(60,40,30,.55);-webkit-text-stroke:.55px #fff;">File</div>
<div class="t" style="left:443.4px;top:22.2px;font-size:25.6px;line-height:25.6px;color:#ffffff;letter-spacing:0.047px;text-shadow:0 2px 5px rgba(60,40,30,.55);-webkit-text-stroke:.55px #fff;">Edit</div>
<div class="t" style="left:538.7px;top:22.2px;font-size:25.6px;line-height:25.6px;color:#ffffff;letter-spacing:0.553px;text-shadow:0 2px 5px rgba(60,40,30,.55);-webkit-text-stroke:.55px #fff;">View</div>
<div class="t" style="left:646.0px;top:22.2px;font-size:25.6px;line-height:25.6px;color:#ffffff;letter-spacing:0.920px;text-shadow:0 2px 5px rgba(60,40,30,.55);-webkit-text-stroke:.55px #fff;">Insert</div>
<div class="t" style="left:764.7px;top:22.2px;font-size:25.6px;line-height:25.6px;color:#ffffff;letter-spacing:0.715px;text-shadow:0 2px 5px rgba(60,40,30,.55);-webkit-text-stroke:.55px #fff;">Format</div>
<div class="t" style="left:898.7px;top:22.2px;font-size:25.6px;line-height:25.6px;color:#ffffff;letter-spacing:0.806px;text-shadow:0 2px 5px rgba(60,40,30,.55);-webkit-text-stroke:.55px #fff;">Tools</div>
<div class="t" style="left:1013.0px;top:22.2px;font-size:25.6px;line-height:25.6px;color:#ffffff;letter-spacing:0.241px;text-shadow:0 2px 5px rgba(60,40,30,.55);-webkit-text-stroke:.55px #fff;">Draw</div>
<div class="t" style="left:1124.8px;top:22.2px;font-size:25.6px;line-height:25.6px;color:#ffffff;letter-spacing:0.630px;text-shadow:0 2px 5px rgba(60,40,30,.55);-webkit-text-stroke:.55px #fff;">Dimension</div>
<div class="t" style="left:1690.5px;top:22.2px;font-size:25.6px;line-height:25.6px;color:#ffffff;letter-spacing:1.362px;text-shadow:0 2px 5px rgba(60,40,30,.55);-webkit-text-stroke:.55px #fff;">Modify</div>
<div class="t" style="left:1822.7px;top:22.2px;font-size:25.6px;line-height:25.6px;color:#ffffff;letter-spacing:0.793px;text-shadow:0 2px 5px rgba(60,40,30,.55);-webkit-text-stroke:.55px #fff;">Window</div>
<div class="t" style="left:1969.0px;top:22.2px;font-size:25.6px;line-height:25.6px;color:#ffffff;letter-spacing:0.397px;text-shadow:0 2px 5px rgba(60,40,30,.55);-webkit-text-stroke:.55px #fff;">Help</div>
<div class="t" style="left:2658.7px;top:22.2px;font-size:25.6px;line-height:25.6px;color:#ffffff;letter-spacing:1.183px;text-shadow:0 2px 5px rgba(60,40,30,.55);-webkit-text-stroke:.55px #fff;">ter. 28/10</div>
<div class="t" style="left:2794.8px;top:22.2px;font-size:25.6px;line-height:25.6px;color:#ffffff;letter-spacing:0.019px;text-shadow:0 2px 5px rgba(60,40,30,.55);-webkit-text-stroke:.55px #fff;">12:57 PM</div>
<svg class="b" style="left:43.2px;top:19.3px;filter:drop-shadow(0 2px 3px rgba(60,40,30,.45));" width="31" height="31" viewBox="0 0 24 24"><path d="M12.152 6.896c-.948 0-2.415-1.078-3.96-1.04-2.04.027-3.91 1.183-4.961 3.014-2.117 3.675-.546 9.103 1.519 12.09 1.013 1.454 2.208 3.09 3.792 3.039 1.52-.065 2.09-.987 3.935-.987 1.831 0 2.35.987 3.96.948 1.637-.026 2.676-1.48 3.676-2.948 1.156-1.688 1.636-3.325 1.662-3.415-.039-.013-3.182-1.221-3.22-4.857-.026-3.04 2.48-4.494 2.597-4.559-1.429-2.09-3.623-2.324-4.39-2.376-2-.156-3.675 1.09-4.61 1.09zM15.53 3.83c.843-1.012 1.4-2.427 1.245-3.83-1.207.052-2.662.805-3.532 1.818-.78.896-1.454 2.338-1.273 3.714 1.338.104 2.715-.688 3.559-1.701" fill="#fff"/></svg>
<svg class="b" style="left:2112px;top:22px;filter:drop-shadow(0 2px 3px rgba(60,40,30,.45));" width="28" height="28" viewBox="0 0 28 28"><circle cx="14" cy="14" r="13.2" fill="#f4f1ee"/><rect x="8.6" y="8.6" width="10.8" height="10.8" rx="2.6" fill="#9e8f83"/></svg>
<svg class="b" style="left:2182px;top:19px;filter:drop-shadow(0 2px 3px rgba(60,40,30,.45));" width="28" height="34" viewBox="0 0 28 34"><path d="M8.9 19.2 L11.7 20.3 L13.6 18.4 L11.2 15.6 L6.6 12.6 L2.6 8.8 L1.2 4.4 L2.2 3 L3 6.6 L4.4 8.4 L5 5.2 L6.8 2.6 L9.2 1 L7.2 4 L6.4 7 L6.8 10.2 L8 10.6 L7.9 7.2 L9.2 5.2 L10.9 4.2 L9.8 6.4 L9.5 9 L10.2 12.2 L12 13.6 L11.9 11 L13.7 9 L13.3 11.6 L14.4 14.2 L15.4 16 L17.6 16.4 L19 15 L19.8 13.2 L19.9 15.4 L19.2 17 L21.2 17.2 L23.3 16 L22.6 17.8 L20.6 19 L17 18.9 L18.6 21.2 L21.4 24.2 L26.6 28.2 L24.4 30.6 L18.6 30.8 L16.4 32.8 L14.4 33.2 L11.8 29.4 L8.2 26.2 L10.6 23.4 L10.2 21.2 Z" fill="#fbf9f7" stroke="#fbf9f7" stroke-width=".6" stroke-linejoin="round"/></svg>
<svg class="b" style="left:2243.9px;top:20.8px;filter:drop-shadow(0 2px 3px rgba(60,40,30,.45));" width="31" height="31" viewBox="0 0 31 31"><rect x="0" y="0" width="8" height="30.3" rx="4" fill="#f4f1ee"/><rect x="11" y="0" width="8.1" height="13.9" rx="4" fill="#f4f1ee"/><rect x="11" y="16.2" width="8.1" height="14.1" rx="4" fill="#f4f1ee"/><rect x="22.2" y="0" width="7.9" height="30.3" rx="4" fill="#f4f1ee"/></svg>
<svg class="b" style="left:2306px;top:24px;filter:drop-shadow(0 2px 3px rgba(60,40,30,.45));" width="52" height="24" viewBox="0 0 52 24"><rect x="1" y="1" width="46" height="22" rx="6.5" fill="none" stroke="#e6dfd9" stroke-opacity=".75" stroke-width="2"/><rect x="4" y="4" width="34.5" height="16" rx="3.8" fill="#f4f1ee"/><path d="M49 8.5 C51 9.3 51.6 10.6 51.6 12 C51.6 13.4 51 14.7 49 15.5 Z" fill="#e6dfd9" fill-opacity=".8"/></svg>
<svg class="b" style="left:2393.5px;top:22.5px;filter:drop-shadow(0 2px 3px rgba(60,40,30,.45));" width="36" height="27" viewBox="0 0 36 27"><g fill="none" stroke="#f4f1ee" stroke-width="4.4" stroke-linecap="butt"><path d="M2.2 9.6 A 22.4 22.4 0 0 1 33.8 9.6"/><path d="M8.2 15.8 A 13.9 13.9 0 0 1 27.8 15.8"/></g><path d="M18 26.4 L12.4 20.6 A 8 8 0 0 1 23.6 20.6 Z" fill="#f4f1ee"/></svg>
<svg class="b" style="left:2466px;top:21px;filter:drop-shadow(0 2px 3px rgba(60,40,30,.45));" width="30" height="30" viewBox="0 0 30 30"><circle cx="12.2" cy="12.2" r="8.2" fill="none" stroke="#f4f1ee" stroke-width="2.8"/><path d="M18.2 18.2 L27.2 26.4" stroke="#f4f1ee" stroke-width="3.4" stroke-linecap="round"/></svg>
<svg class="b" style="left:2524.5px;top:23.2px;filter:drop-shadow(0 2px 3px rgba(60,40,30,.45));" width="27" height="26" viewBox="0 0 27 26"><rect x="1.2" y="1.2" width="24.6" height="9" rx="4.5" fill="none" stroke="#f4f1ee" stroke-width="2.4"/><circle cx="7" cy="5.7" r="3" fill="#f4f1ee"/><rect x="0" y="14.6" width="27" height="11.4" rx="5.7" fill="#f4f1ee"/><circle cx="20.6" cy="20.3" r="3.2" fill="#a39488"/></svg>
<svg class="b" style="left:2561px;top:31.4px;" width="10" height="10" viewBox="0 0 10 10"><circle cx="5" cy="5" r="4.8" fill="#5a5ae8"/></svg>
<svg class="b" style="left:2598px;top:22px;" width="28" height="28" viewBox="0 0 28 28"><defs><radialGradient id="si1" cx="50%" cy="50%" r="50%"><stop offset="0" stop-color="#2b2f5a"/><stop offset=".7" stop-color="#20264a"/><stop offset="1" stop-color="#3b3560"/></radialGradient><radialGradient id="si2" cx="22%" cy="62%" r="45%"><stop offset="0" stop-color="#ff3a6e"/><stop offset="1" stop-color="#ff3a6e" stop-opacity="0"/></radialGradient><radialGradient id="si3" cx="66%" cy="18%" r="42%"><stop offset="0" stop-color="#39d6a0"/><stop offset="1" stop-color="#39d6a0" stop-opacity="0"/></radialGradient><radialGradient id="si4" cx="78%" cy="70%" r="45%"><stop offset="0" stop-color="#4f7cff"/><stop offset="1" stop-color="#4f7cff" stop-opacity="0"/></radialGradient><radialGradient id="si5" cx="56%" cy="46%" r="22%"><stop offset="0" stop-color="#ffffff"/><stop offset="1" stop-color="#bfe6ff" stop-opacity="0"/></radialGradient></defs><circle cx="14" cy="14" r="13.4" fill="url(#si1)"/><circle cx="14" cy="14" r="13.4" fill="url(#si2)"/><circle cx="14" cy="14" r="13.4" fill="url(#si3)"/><circle cx="14" cy="14" r="13.4" fill="url(#si4)"/><circle cx="14" cy="14" r="13.4" fill="url(#si5)"/></svg>
<div class="b" style="left:0px;top:3.5px;width:2940px;height:4.8px;background:;background:repeating-linear-gradient(90deg,#2c2520 0 2.6px,#aaa29e 2.6px 10.6px,#2c2520 10.6px 16px);"></div>
<div class="b" style="left:0px;top:8.3px;width:4.2px;height:1903.7px;background:;background:repeating-linear-gradient(180deg,#8f9196 0 6.3px,#16191f 6.3px 14.3px,#8f9196 14.3px 16px);"></div>
<div class="b" style="left:2937.6px;top:8.3px;width:2.4px;height:1903.7px;background:;background:repeating-linear-gradient(180deg,#85878b 0 6.3px,#24272d 6.3px 14.3px,#85878b 14.3px 16px);"></div>
<div class="b" style="left:0px;top:1909.8px;width:2940px;height:2.2px;background:;background:repeating-linear-gradient(90deg,#16191f 0 2.6px,#8f9196 2.6px 10.6px,#16191f 10.6px 16px);"></div>
<svg class="b" style="left:0px;top:0px;" width="2940" height="1912" viewBox="0 0 2940 1912"><circle cx="3" cy="5.6" r="7.6" fill="#9a9a9a" stroke="#f6f6f6" stroke-width="2"/><circle cx="1470.8" cy="5.8" r="7.6" fill="#9a9a9a" stroke="#f6f6f6" stroke-width="2"/><circle cx="2938" cy="5.6" r="7.6" fill="#9a9a9a" stroke="#f6f6f6" stroke-width="2"/><circle cx="3" cy="959" r="7.6" fill="#9a9a9a" stroke="#f6f6f6" stroke-width="2"/><circle cx="2938" cy="958.5" r="7.6" fill="#9a9a9a" stroke="#f6f6f6" stroke-width="2"/><circle cx="2" cy="1910" r="7.6" fill="#9a9a9a" stroke="#f6f6f6" stroke-width="2"/><circle cx="1470.8" cy="1910" r="7.6" fill="#9a9a9a" stroke="#f6f6f6" stroke-width="2"/><circle cx="2938" cy="1910" r="7.6" fill="#9a9a9a" stroke="#f6f6f6" stroke-width="2"/></svg>
</body></html>
